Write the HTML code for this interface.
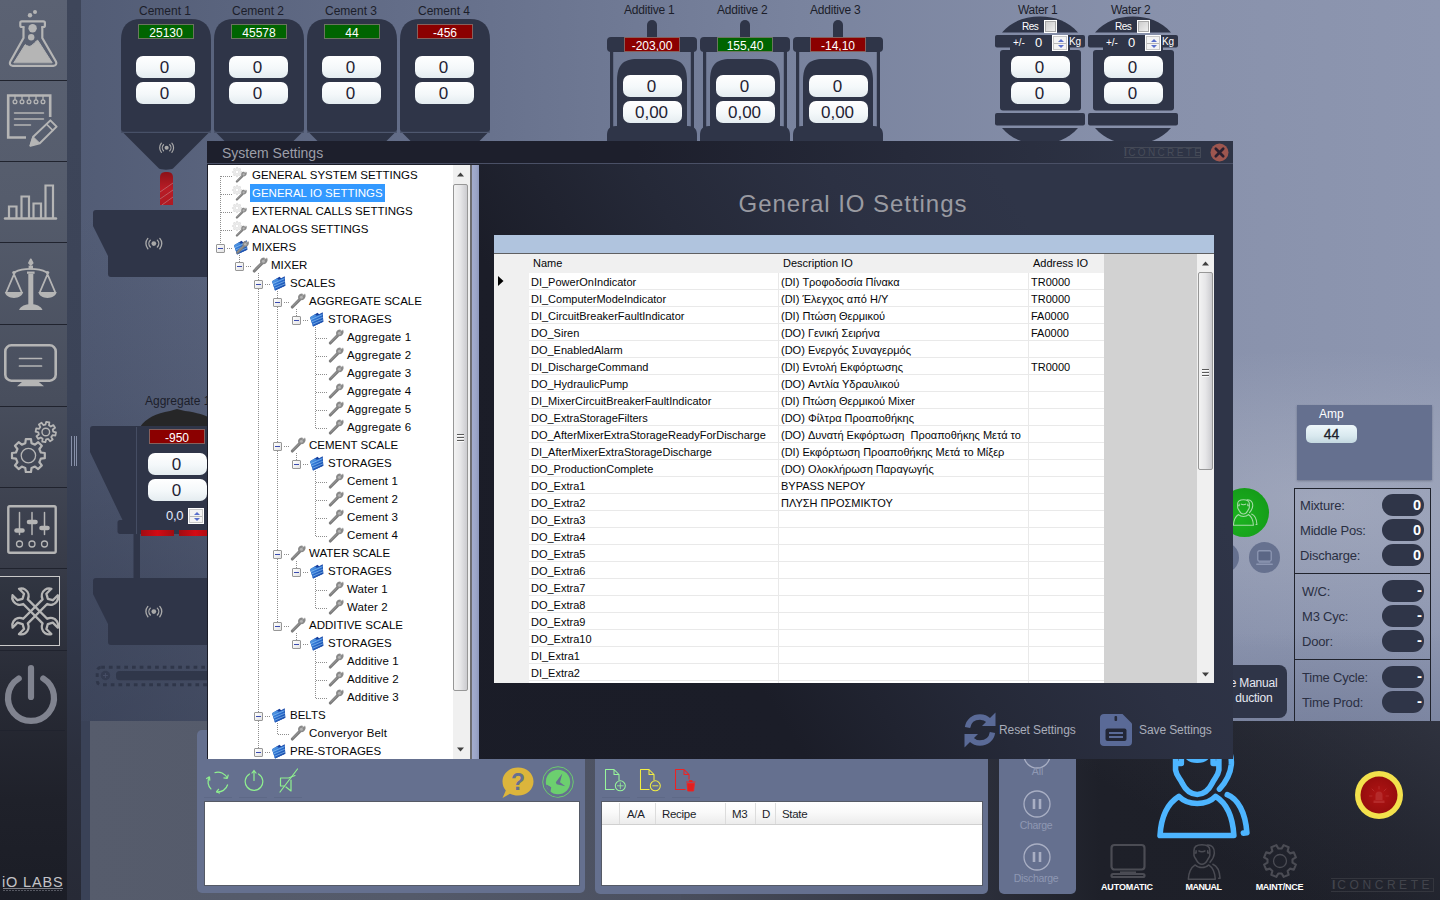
<!DOCTYPE html><html><head><meta charset="utf-8"><title>System Settings</title><style>
*{box-sizing:border-box;margin:0;padding:0}
html,body{width:1440px;height:900px;overflow:hidden}
body{font-family:"Liberation Sans",sans-serif;font-size:12px;color:#1f2230;position:relative;
 background:#6b7590}
#root{position:absolute;left:0;top:0;width:1440px;height:900px;overflow:hidden;
 background:
  radial-gradient(ellipse 1000px 620px at 60px 800px, rgba(34,40,58,.5) 0, rgba(34,40,58,.36) 35%, rgba(36,42,60,.12) 65%, rgba(36,42,60,0) 95%),
  radial-gradient(ellipse 420px 150px at 1320px 500px, rgba(205,208,218,.3) 0, rgba(205,208,218,.16) 50%, rgba(205,208,218,0) 100%),
  radial-gradient(ellipse 460px 130px at 1340px 760px, rgba(80,90,122,.4) 0, rgba(80,90,122,.2) 55%, rgba(80,90,122,0) 100%),
  linear-gradient(to right,#525c75 80px,#636d88 400px,#79839e 800px,#8891ab 1150px,#8d96b0 1440px)}
.abs{position:absolute}
.dk{background:#2f3548}
.lbl{position:absolute;font-size:12px;color:#1c1e2a;white-space:nowrap;text-align:center}
.badge{position:absolute;width:56px;height:15px;border:1px solid #6d7a6d;color:#fff;font-size:12px;line-height:16px;text-align:center;overflow:hidden}
.badge.g{background:#006400;border-color:#6b7560}
.badge.r{background:#8b0000;border-color:#86605c}
.inp{position:absolute;width:59px;height:22px;border-radius:7px;background:linear-gradient(#ffffff,#f4f8fa 55%,#e4ecf0);color:#1f2233;font-size:17px;line-height:24px;text-align:center;text-indent:-2px}
.spin{position:absolute;width:16px;height:16px;background:#f4f4f4;border:1px solid #fff;box-shadow:inset 0 0 0 1px #c8c8c8}
.spin:before{content:"";position:absolute;left:4.5px;top:2.5px;border:3px solid transparent;border-top:0;border-bottom:3.5px solid #5a70cc}
.spin:after{content:"";position:absolute;left:4.5px;bottom:2.5px;border:3px solid transparent;border-bottom:0;border-top:3.5px solid #5a70cc}
.spin i{position:absolute;left:1px;right:1px;top:7px;height:1px;background:#b8b8b8}
</style></head><body><div id="root"><div class="abs" style="left:81px;top:721px;width:1359px;height:179px;background:linear-gradient(to right,#565c6c 0,#545a6a 330px,#4a4f5f 600px,#33364300 0),linear-gradient(to right,#565c6c 0,#545a6a 330px,#484d5c 620px,#2c2f3b 900px,#1e2029 1020px,#1d1f28 1359px)"></div><div class="abs" style="left:81px;top:721px;width:9px;height:179px;background:#3a4257"></div><div class="abs" style="left:1000px;top:721px;width:440px;height:179px;background:linear-gradient(212deg,rgba(72,77,94,.42) 0,rgba(72,77,94,.18) 30%,rgba(72,77,94,0) 60%)"></div><div class="abs" style="left:0;top:0;width:67px;height:900px;background:linear-gradient(to bottom,#5b6273 0,#555c6c 200px,#484e5d 400px,#383c49 560px,#292c37 680px,#1f212a 800px,#1b1d26 900px)"></div><div class="abs" style="left:67px;top:0;width:14px;height:900px;background:linear-gradient(to bottom,#3e465a 0,#3b4357 400px,#333a4d 600px,#2b2f3d 760px,#272a36 900px)"></div><div class="abs" style="left:0;top:80px;width:67px;height:1px;background:#20232e"></div><div class="abs" style="left:0;top:161px;width:67px;height:1px;background:#20232e"></div><div class="abs" style="left:0;top:242px;width:67px;height:1px;background:#20232e"></div><div class="abs" style="left:0;top:324px;width:67px;height:1px;background:#20232e"></div><div class="abs" style="left:0;top:406px;width:67px;height:1px;background:#20232e"></div><div class="abs" style="left:0;top:487px;width:67px;height:1px;background:#20232e"></div><div class="abs" style="left:0;top:568px;width:67px;height:1px;background:#20232e"></div><div class="abs" style="left:0;top:650px;width:67px;height:1px;background:#20232e"></div><div class="abs" style="left:0;top:730px;width:65px;height:1px;background:#20232e"></div><div class="abs" style="left:-1px;top:576px;width:61px;height:70px;border:1px solid #c9c9c9;background:rgba(20,22,30,.12)"></div><div class="abs" style="left:71px;top:436px;width:6px;height:30px;border-left:1px solid #8790a8;border-right:1px solid #8790a8"><div style="margin-left:1.5px;width:1px;height:30px;background:#8790a8"></div></div><svg class="abs" style="left:0px;top:0px" width="67" height="80" viewBox="0 0 67 80" fill="none" stroke="#b5b5b5" stroke-width="2.2" stroke-linecap="round" stroke-linejoin="round">
<circle cx="35" cy="12" r="2" fill="#b5b5b5" stroke="none"/><circle cx="30" cy="15.2" r="2.2" fill="#b5b5b5" stroke="none"/>
<path d="M23.5 27H21.8c-1 0-1.5-.5-1.5-1.5v-2.7c0-1 .5-1.5 1.5-1.5h21.6c1 0 1.5.5 1.5 1.5v2.7c0 1-.5 1.5-1.5 1.5H42.3"/>
<path d="M23.5 27v11L10.3 61.5c-1.2 2.3 0 4.3 2.5 4.3h40.6c2.5 0 3.7-2 2.5-4.3L42.3 38V27"/>
<path d="M14 62.5L25.2 44.6c2 1.3 4 2.5 6 1.2 2.8-1.8 3.8-4.2 6.5-5.6L52 62.5z" fill="#b5b5b5" stroke="#b5b5b5" stroke-width="1"/>
<circle cx="32.6" cy="28.3" r="4.2" fill="#b5b5b5" stroke="none"/><circle cx="31.2" cy="37.3" r="3.2" fill="#b5b5b5" stroke="none"/>
</svg><svg class="abs" style="left:0px;top:81px" width="67" height="80" viewBox="0 0 67 80" fill="none" stroke="#b5b5b5" stroke-width="2.2" stroke-linecap="round" stroke-linejoin="round">
<path d="M26 56.5H8.2V14.5h42V36" stroke-width="2.6" stroke-linejoin="miter" stroke-linecap="butt"/>
<g stroke-width="1.3"><circle cx="15" cy="20.7" r="1.9"/><circle cx="22" cy="20.7" r="1.9"/><circle cx="29" cy="20.7" r="1.9"/><circle cx="36" cy="20.7" r="1.9"/><circle cx="43" cy="20.7" r="1.9"/>
<path d="M15 14.5v4.3M22 14.5v4.3M29 14.5v4.3M36 14.5v4.3M43 14.5v4.3"/></g>
<path d="M14.5 32h29M14.5 38h29M14.5 44h16" stroke-width="1.5"/>
<path d="M50.4 39.4L56.6 45.6 39.8 62.2 30.4 64.7 33.2 55.8Z" stroke-width="2"/><path d="M33.2 55.8L39.8 62.2 30.4 64.7Z" fill="#b5b5b5" stroke-width="1"/><path d="M46.6 43.2L52.8 49.4" stroke-width="1.6"/>
</svg><svg class="abs" style="left:0px;top:162px" width="67" height="80" viewBox="0 0 67 80" fill="none" stroke="#b5b5b5" stroke-width="2.2" stroke-linecap="round" stroke-linejoin="round">
<path d="M5 56.5h51" stroke-width="2.4"/>
<path d="M9 56V44.5h7.5V56M21.5 56V34.5h7.5V56M33.5 56V41.5H41V56M45.5 56V23.5H53V56" stroke-width="2.2" stroke-linejoin="miter"/>
</svg><svg class="abs" style="left:0px;top:243px" width="67" height="81" viewBox="0 0 67 81" fill="none" stroke="#b5b5b5" stroke-width="2.2" stroke-linecap="round" stroke-linejoin="round"><g transform="translate(0 1.8) scale(1 .868)">
<path d="M30.5 26.5h0" />
<path d="M14.5 31.5c5-2.8 9.5-3.7 16-3.7s11 .9 16 3.7" stroke-width="2"/>
<circle cx="14" cy="32" r="1.8" fill="#b5b5b5" stroke="none"/><circle cx="47.5" cy="32" r="1.8" fill="#b5b5b5" stroke="none"/>
<path d="M30.8 16.5l2 4.5-2 2.5-2-2.5z" fill="#b5b5b5" stroke-width="1.5"/>
<rect x="28.6" y="24" width="4.4" height="4.5" fill="#b5b5b5" stroke="none"/>
<path d="M28.3 33.5h5v36h-5z" fill="#b5b5b5" stroke="none"/>
<path d="M27 30.8h7.6v2.6H27z" fill="#b5b5b5" stroke="none"/>
<path d="M19 75c2-4.5 6-6.5 11.8-6.5S40.5 70.5 42.5 75z" fill="#b5b5b5" stroke="none"/>
<path d="M14 34L6.5 54M14 34l7.5 20M47.5 34L40 54M47.5 34L55 54" stroke-width="1.8"/>
<path d="M4.8 54.5h18.4c-.8 4.3-4.4 6.8-9.2 6.8s-8.4-2.5-9.2-6.8zM38.3 54.5h18.4c-.8 4.3-4.4 6.8-9.2 6.8s-8.4-2.5-9.2-6.8z" fill="#b5b5b5" stroke="none"/>
</g>
</svg><svg class="abs" style="left:0px;top:325px" width="67" height="80" viewBox="0 0 67 80" fill="none" stroke="#b5b5b5" stroke-width="2.2" stroke-linecap="round" stroke-linejoin="round">
<rect x="5.3" y="20.3" width="50.4" height="35.4" rx="6" stroke-width="2.6"/>
<path d="M19.5 33.5h22M19.5 41h22" stroke-width="1.7"/>
<path d="M22.5 56.5h15.8l5.7 4.7H17z" fill="#b5b5b5" stroke="none"/>
</svg><svg class="abs" style="left:0px;top:406px" width="67" height="81" viewBox="0 0 67 81" fill="none" stroke="#b5b5b5" stroke-width="2.2" stroke-linecap="round" stroke-linejoin="round">
<path d="M53.19 25.68 L55.99 26.44 L55.36 29.57 L52.48 29.18 L51.26 31.00 L52.70 33.52 L50.04 35.28 L48.28 32.97 L46.12 33.39 L45.36 36.19 L42.23 35.56 L42.62 32.68 L40.80 31.46 L38.28 32.90 L36.52 30.24 L38.83 28.48 L38.41 26.32 L35.61 25.56 L36.24 22.43 L39.12 22.82 L40.34 21.00 L38.90 18.48 L41.56 16.72 L43.32 19.03 L45.48 18.61 L46.24 15.81 L49.37 16.44 L48.98 19.32 L50.80 20.54 L53.32 19.10 L55.08 21.76 L52.77 23.52Z" stroke-width="1.8"/><circle cx="45.8" cy="26" r="3.8" stroke-width="1.4"/>
<path d="M40.82 46.51 L44.80 47.00 L44.80 52.20 L40.82 52.69 L39.37 56.20 L41.83 59.36 L38.16 63.03 L35.00 60.57 L31.49 62.02 L31.00 66.00 L25.80 66.00 L25.31 62.02 L21.80 60.57 L18.64 63.03 L14.97 59.36 L17.43 56.20 L15.98 52.69 L12.00 52.20 L12.00 47.00 L15.98 46.51 L17.43 43.00 L14.97 39.84 L18.64 36.17 L21.80 38.63 L25.31 37.18 L25.80 33.20 L31.00 33.20 L31.49 37.18 L35.00 38.63 L38.16 36.17 L41.83 39.84 L39.37 43.00Z" stroke-width="2.2"/><circle cx="28.4" cy="49.6" r="7.2" stroke-width="1.3"/>
</svg><svg class="abs" style="left:0px;top:488px" width="67" height="80" viewBox="0 0 67 80" fill="none" stroke="#b5b5b5" stroke-width="2.2" stroke-linecap="round" stroke-linejoin="round">
<rect x="8.3" y="18.3" width="47.4" height="46.4" rx="1.5" stroke-width="2.4"/>
<path d="M19.5 24.5v22M32 24.5v22M44.5 24.5v22" stroke-width="1.5"/>
<path d="M16.5 42.5h6M29 34h6.5M41.5 40h6" stroke-width="4.6"/>
<circle cx="19.5" cy="56" r="3" stroke-width="1.3"/><circle cx="32" cy="56" r="3" stroke-width="1.3"/><circle cx="44.5" cy="56" r="3" stroke-width="1.3"/>
</svg><svg class="abs" style="left:0px;top:569px" width="67" height="81" viewBox="0 0 67 81" fill="none" stroke="#b5b5b5" stroke-width="2.2" stroke-linecap="round" stroke-linejoin="round">
<g transform="translate(35.2 42.4) scale(.76)"><path d="M-4.3 -18c-4.8 -1.8 -7.7 -6.5 -6.7 -11.5 .6 -3 2.5 -5.3 5 -6.6v9.3l6 3.3 6 -3.3v-9.3c2.5 1.3 4.4 3.6 5 6.6 1 5 -1.9 9.7 -6.7 11.5v36c4.8 1.8 7.7 6.5 6.7 11.5 -.6 3 -2.5 5.3 -5 6.6v-9.3l-6 -3.3 -6 3.3v9.3c-2.5 -1.3 -4.4 -3.6 -5 -6.6 -1 -5 1.9 -9.7 6.7 -11.500z" transform="rotate(45)" stroke-width="3.1"/><path d="M-4.3 -18c-4.8 -1.8 -7.7 -6.5 -6.7 -11.5 .6 -3 2.5 -5.3 5 -6.6v9.3l6 3.3 6 -3.3v-9.3c2.5 1.3 4.4 3.6 5 6.6 1 5 -1.9 9.7 -6.7 11.5v36c4.8 1.8 7.7 6.5 6.7 11.5 -.6 3 -2.5 5.3 -5 6.6v-9.3l-6 -3.3 -6 3.3v9.3c-2.5 -1.3 -4.4 -3.6 -5 -6.6 -1 -5 1.9 -9.7 6.7 -11.500z" transform="rotate(-45)" stroke-width="3.1"/></g>
</svg><svg class="abs" style="left:0;top:649.5px" width="67" height="80" viewBox="0 0 67 80" fill="none" stroke="#80838f" stroke-width="6.2" stroke-linecap="round"><path d="M31 18v29"/><path d="M18.7 28.5a23 23 0 1 0 24.6 0"/></svg><div class="abs" style="left:2px;top:873.5px;width:64px;font-size:14.5px;line-height:16px;color:#c4c4c8;letter-spacing:.85px;white-space:nowrap">iO LABS</div><div class="abs" style="left:3px;top:888px;width:60px;height:1px;background:#7e8088"></div><div class="abs" style="left:3px;top:890px;width:60px;height:1px;background:repeating-linear-gradient(to right,#565862 0 2px,transparent 2px 3px)"></div><div class="lbl" style="left:139px;top:4px">Cement 1</div><svg class="abs" style="left:121px;top:19px" width="90" height="152" viewBox="0 0 90 152"><path d="M0 21C0 7 7 0 20 0h50c13 0 20 7 20 21v89c0 2-1 3-3 3H3c-2 0-3-1-3-3z" fill="#2f3548"/><path d="M2.5 114h85L52 149.5c-1.5 1.5-12.5 1.5-14 0z" fill="#2d3345"/><path d="M0 113h90" stroke="#3b4256" stroke-width="1"/></svg><div class="badge g" style="left:138px;top:24px">25130</div><div class="inp" style="left:136px;top:56px">0</div><div class="inp" style="left:136px;top:82px">0</div><div class="lbl" style="left:232px;top:4px">Cement 2</div><svg class="abs" style="left:214px;top:19px" width="90" height="152" viewBox="0 0 90 152"><path d="M0 21C0 7 7 0 20 0h50c13 0 20 7 20 21v89c0 2-1 3-3 3H3c-2 0-3-1-3-3z" fill="#2f3548"/><path d="M2.5 114h85L52 149.5c-1.5 1.5-12.5 1.5-14 0z" fill="#2d3345"/><path d="M0 113h90" stroke="#3b4256" stroke-width="1"/></svg><div class="badge g" style="left:231px;top:24px">45578</div><div class="inp" style="left:229px;top:56px">0</div><div class="inp" style="left:229px;top:82px">0</div><div class="lbl" style="left:325px;top:4px">Cement 3</div><svg class="abs" style="left:307px;top:19px" width="90" height="152" viewBox="0 0 90 152"><path d="M0 21C0 7 7 0 20 0h50c13 0 20 7 20 21v89c0 2-1 3-3 3H3c-2 0-3-1-3-3z" fill="#2f3548"/><path d="M2.5 114h85L52 149.5c-1.5 1.5-12.5 1.5-14 0z" fill="#2d3345"/><path d="M0 113h90" stroke="#3b4256" stroke-width="1"/></svg><div class="badge g" style="left:324px;top:24px">44</div><div class="inp" style="left:322px;top:56px">0</div><div class="inp" style="left:322px;top:82px">0</div><div class="lbl" style="left:418px;top:4px">Cement 4</div><svg class="abs" style="left:400px;top:19px" width="90" height="152" viewBox="0 0 90 152"><path d="M0 21C0 7 7 0 20 0h50c13 0 20 7 20 21v89c0 2-1 3-3 3H3c-2 0-3-1-3-3z" fill="#2f3548"/><path d="M2.5 114h85L52 149.5c-1.5 1.5-12.5 1.5-14 0z" fill="#2d3345"/><path d="M0 113h90" stroke="#3b4256" stroke-width="1"/></svg><div class="badge r" style="left:417px;top:24px">-456</div><div class="inp" style="left:415px;top:56px">0</div><div class="inp" style="left:415px;top:82px">0</div><svg class="abs" style="left:158.36px;top:142.24px" width="17.28" height="11.52" viewBox="-12 -8 24 16" fill="none" stroke="#a9a9a9" stroke-width="1.65" stroke-linecap="round"><circle r="2.9" fill="#a9a9a9" stroke="none"/><path d="M-4.3 -4.2a6 6 0 0 0 0 8.4M4.3 -4.2a6 6 0 0 1 0 8.4M-7.3 -6.3a9.6 9.6 0 0 0 0 12.6M7.3 -6.3a9.6 9.6 0 0 1 0 12.6"/></svg><svg class="abs" style="left:160px;top:171px" width="13" height="35" viewBox="0 0 14 35" preserveAspectRatio="none"><defs><linearGradient id="au" x1="0" x2="0" y1="0" y2="1"><stop offset="0" stop-color="#8c1218"/><stop offset=".5" stop-color="#b81c26"/><stop offset="1" stop-color="#b01a22"/></linearGradient></defs><path d="M0 6.5C0 2 3 1 7 1s7 1 7 5.5V34H0z" fill="url(#au)"/><path d="M0 21L14 12M0 28L14 19M2 34L14 26" stroke="#c07a80" stroke-width=".7"/></svg><svg class="abs" style="left:92px;top:210px" width="120" height="68" viewBox="0 0 120 68"><path d="M1 3c0-2 1-3 3-3h116v67H19c-2 0-3-1-3-3V46L1 16z" fill="#2f3548"/></svg><svg class="abs" style="left:144.16px;top:236.94px" width="19.68" height="13.12" viewBox="-12 -8 24 16" fill="none" stroke="#a9a9a9" stroke-width="1.65" stroke-linecap="round"><circle r="2.9" fill="#a9a9a9" stroke="none"/><path d="M-4.3 -4.2a6 6 0 0 0 0 8.4M4.3 -4.2a6 6 0 0 1 0 8.4M-7.3 -6.3a9.6 9.6 0 0 0 0 12.6M7.3 -6.3a9.6 9.6 0 0 1 0 12.6"/></svg><div class="lbl" style="left:624px;top:3px;letter-spacing:-.22px">Additive 1</div><svg class="abs" style="left:607px;top:19px" width="90" height="125" viewBox="0 0 90 125" fill="#2f3548"><path d="M40 18.5V6a5 5 0 0 1 10 0v12.5z"/><rect x="0" y="18" width="90" height="15" rx="4"/><rect x="3" y="32" width="3.2" height="78"/><rect x="83.8" y="32" width="3.2" height="78"/><path d="M10 110V62c0-16 6-22 20-22h30c14 0 20 6 20 22v48z"/><path d="M0 125v-9c0-6 3-9 9-9h72c6 0 9 3 9 9v9z"/></svg><div class="badge r" style="left:624px;top:37px">-203,00</div><div class="inp" style="left:623px;top:75px">0</div><div class="inp" style="left:623px;top:101px">0,00</div><div class="lbl" style="left:717px;top:3px;letter-spacing:-.22px">Additive 2</div><svg class="abs" style="left:700px;top:19px" width="90" height="125" viewBox="0 0 90 125" fill="#2f3548"><path d="M40 18.5V6a5 5 0 0 1 10 0v12.5z"/><rect x="0" y="18" width="90" height="15" rx="4"/><rect x="3" y="32" width="3.2" height="78"/><rect x="83.8" y="32" width="3.2" height="78"/><path d="M10 110V62c0-16 6-22 20-22h30c14 0 20 6 20 22v48z"/><path d="M0 125v-9c0-6 3-9 9-9h72c6 0 9 3 9 9v9z"/></svg><div class="badge g" style="left:717px;top:37px">155,40</div><div class="inp" style="left:716px;top:75px">0</div><div class="inp" style="left:716px;top:101px">0,00</div><div class="lbl" style="left:810px;top:3px;letter-spacing:-.22px">Additive 3</div><svg class="abs" style="left:793px;top:19px" width="90" height="125" viewBox="0 0 90 125" fill="#2f3548"><path d="M40 18.5V6a5 5 0 0 1 10 0v12.5z"/><rect x="0" y="18" width="90" height="15" rx="4"/><rect x="3" y="32" width="3.2" height="78"/><rect x="83.8" y="32" width="3.2" height="78"/><path d="M10 110V62c0-16 6-22 20-22h30c14 0 20 6 20 22v48z"/><path d="M0 125v-9c0-6 3-9 9-9h72c6 0 9 3 9 9v9z"/></svg><div class="badge r" style="left:810px;top:37px">-14,10</div><div class="inp" style="left:809px;top:75px">0</div><div class="inp" style="left:809px;top:101px">0,00</div><div class="lbl" style="left:1018px;top:3px;letter-spacing:-.3px">Water 1</div><svg class="abs" style="left:995px;top:16px" width="90" height="128" viewBox="0 0 90 128" fill="#2f3548"><path d="M7 16.5C17 5 30 .5 45 .5S73 5 83 16.5z"/><rect x="0" y="19" width="90" height="12.5" rx="2"/><rect x="15" y="30" width="60" height="6"/><rect x="5" y="34" width="81" height="60.5" rx="3"/><rect x="0" y="97" width="90" height="12.5" rx="2"/><path d="M7 112C17 123.5 30 128 45 128s28-4.5 38-16z"/></svg><div class="abs" style="left:1022px;top:21px;font-size:10px;color:#fff;letter-spacing:-.5px">Res</div><div class="abs" style="left:1044px;top:20px;width:13px;height:13px;border:1px solid #fff;background:linear-gradient(135deg,#c9c9c9,#f2f2f2);box-shadow:inset 0 0 0 1px #a8a8a8"></div><div class="abs" style="left:1013px;top:37px;font-size:10px;color:#fff">+/-</div><div class="abs" style="left:1035px;top:35px;font-size:13px;color:#fff">0</div><div class="spin" style="left:1052px;top:35px"><i></i></div><div class="abs" style="left:1069px;top:36px;font-size:10px;color:#fff;letter-spacing:-.2px">Kg</div><div class="inp" style="left:1011px;top:56px">0</div><div class="inp" style="left:1011px;top:82px">0</div><div class="lbl" style="left:1111px;top:3px;letter-spacing:-.3px">Water 2</div><svg class="abs" style="left:1088px;top:16px" width="90" height="128" viewBox="0 0 90 128" fill="#2f3548"><path d="M7 16.5C17 5 30 .5 45 .5S73 5 83 16.5z"/><rect x="0" y="19" width="90" height="12.5" rx="2"/><rect x="15" y="30" width="60" height="6"/><rect x="5" y="34" width="81" height="60.5" rx="3"/><rect x="0" y="97" width="90" height="12.5" rx="2"/><path d="M7 112C17 123.5 30 128 45 128s28-4.5 38-16z"/></svg><div class="abs" style="left:1115px;top:21px;font-size:10px;color:#fff;letter-spacing:-.5px">Res</div><div class="abs" style="left:1137px;top:20px;width:13px;height:13px;border:1px solid #fff;background:linear-gradient(135deg,#c9c9c9,#f2f2f2);box-shadow:inset 0 0 0 1px #a8a8a8"></div><div class="abs" style="left:1106px;top:37px;font-size:10px;color:#fff">+/-</div><div class="abs" style="left:1128px;top:35px;font-size:13px;color:#fff">0</div><div class="spin" style="left:1145px;top:35px"><i></i></div><div class="abs" style="left:1162px;top:36px;font-size:10px;color:#fff;letter-spacing:-.2px">Kg</div><div class="inp" style="left:1104px;top:56px">0</div><div class="inp" style="left:1104px;top:82px">0</div><div class="lbl" style="left:145px;top:394px;text-align:left">Aggregate 1</div><svg class="abs" style="left:140px;top:408px" width="72" height="19" viewBox="0 0 72 19"><path d="M0 19C6 10 16 5.5 30 3l7-2 8 2c12 1.5 20 4 27 8v8z" fill="#262627"/></svg><svg class="abs" style="left:89px;top:425px" width="123" height="154" viewBox="0 0 123 154"><path d="M1 4c0-2 1-3 3-3h119v108H51v44h-6.5v-44H31c-1.5 0-2.5-1-2.5-2.5v-9c0-1.5 1-2.5 2.5-2.5h2.5L1 27z" fill="#2f3548"/><path d="M47.5 2v107" stroke="#454d63" stroke-width="1"/></svg><div class="badge r" style="left:149px;top:429px">-950</div><div class="inp" style="left:148px;top:453px">0</div><div class="inp" style="left:148px;top:479px">0</div><div class="abs" style="left:166px;top:508px;font-size:13px;color:#e4ecff;letter-spacing:-.3px">0,0</div><div class="spin" style="left:188px;top:508px"><i></i></div><div class="abs" style="left:141px;top:530px;width:33px;height:6px;background:linear-gradient(to right,#a00d12,#d40a14 50%,#a00d12)"></div><div class="abs" style="left:179px;top:530px;width:33px;height:6px;background:linear-gradient(to right,#a00d12,#d40a14 50%,#a00d12)"></div><svg class="abs" style="left:92px;top:578px" width="120" height="68" viewBox="0 0 120 68"><path d="M1 3c0-2 1-3 3-3h116v67H19c-2 0-3-1-3-3V46L1 16z" fill="#2f3548"/></svg><svg class="abs" style="left:144.16px;top:604.94px" width="19.68" height="13.12" viewBox="-12 -8 24 16" fill="none" stroke="#a9a9a9" stroke-width="1.65" stroke-linecap="round"><circle r="2.9" fill="#a9a9a9" stroke="none"/><path d="M-4.3 -4.2a6 6 0 0 0 0 8.4M4.3 -4.2a6 6 0 0 1 0 8.4M-7.3 -6.3a9.6 9.6 0 0 0 0 12.6M7.3 -6.3a9.6 9.6 0 0 1 0 12.6"/></svg><svg class="abs" style="left:92px;top:662px" width="140" height="28" viewBox="0 0 140 28"><rect x="5.2" y="5.2" width="150" height="17.6" rx="4" fill="none" stroke="#2f3649" stroke-width="2.9" stroke-dasharray="3.7 4"/><rect x="24" y="9" width="130" height="9.2" rx="3.5" fill="#30374a"/><circle cx="13.4" cy="13.5" r="4.7" fill="#343b50"/><path d="M11 13.500h4.800M13.400 11.100v4.8" stroke="#485068" stroke-width=".9"/></svg><div class="abs" style="left:1297px;top:405px;width:135px;height:75px;background:#65708f;box-shadow:0 1px 2px rgba(40,46,66,.35)"></div><div class="abs" style="left:1319px;top:407px;font-size:12px;color:#fff">Amp</div><div class="abs" style="left:1306px;top:425px;width:51px;height:18px;border-radius:5px;background:linear-gradient(#eef7fb,#d9e9ef 60%,#c4d8e0);font-size:14px;line-height:18px;text-align:center;color:#1c1e2a;-webkit-text-stroke:.3px #1c1e2a">44</div><div class="abs" style="left:1294px;top:488px;width:137px;height:233px;border:1px solid #20232d;border-bottom:0"></div><div class="abs" style="left:1294px;top:573px;width:137px;height:1px;background:#20232d"></div><div class="abs" style="left:1294px;top:659px;width:137px;height:1px;background:#20232d"></div><div class="abs" style="left:1300px;top:498px;font-size:13px;line-height:16px;letter-spacing:-.2px;color:#2a2f42;white-space:nowrap">Mixture:</div><div class="abs" style="left:1382px;top:494px;width:42px;height:22px;border-radius:11px;background:#2f3548;color:#fff;font-weight:bold;font-size:14.5px;line-height:22px;text-align:right;padding-right:3px">0</div><div class="abs" style="left:1300px;top:523px;font-size:13px;line-height:16px;letter-spacing:-.2px;color:#2a2f42;white-space:nowrap">Middle Pos:</div><div class="abs" style="left:1382px;top:519px;width:42px;height:22px;border-radius:11px;background:#2f3548;color:#fff;font-weight:bold;font-size:14.5px;line-height:22px;text-align:right;padding-right:3px">0</div><div class="abs" style="left:1300px;top:548px;font-size:13px;line-height:16px;letter-spacing:-.2px;color:#2a2f42;white-space:nowrap">Discharge:</div><div class="abs" style="left:1382px;top:544px;width:42px;height:22px;border-radius:11px;background:#2f3548;color:#fff;font-weight:bold;font-size:14.5px;line-height:22px;text-align:right;padding-right:3px">0</div><div class="abs" style="left:1302px;top:584px;font-size:13px;line-height:16px;letter-spacing:-.2px;color:#2a2f42;white-space:nowrap">W/C:</div><div class="abs" style="left:1382px;top:580px;width:42px;height:22px;border-radius:11px;background:#2f3548;color:#fff;font-weight:bold;font-size:15px;line-height:20px;text-align:right;padding-right:2px">-</div><div class="abs" style="left:1302px;top:609px;font-size:13px;line-height:16px;letter-spacing:-.2px;color:#2a2f42;white-space:nowrap">M3 Cyc:</div><div class="abs" style="left:1382px;top:605px;width:42px;height:22px;border-radius:11px;background:#2f3548;color:#fff;font-weight:bold;font-size:15px;line-height:20px;text-align:right;padding-right:2px">-</div><div class="abs" style="left:1302px;top:634px;font-size:13px;line-height:16px;letter-spacing:-.2px;color:#2a2f42;white-space:nowrap">Door:</div><div class="abs" style="left:1382px;top:630px;width:42px;height:22px;border-radius:11px;background:#2f3548;color:#fff;font-weight:bold;font-size:15px;line-height:20px;text-align:right;padding-right:2px">-</div><div class="abs" style="left:1302px;top:670px;font-size:13px;line-height:16px;letter-spacing:-.2px;color:#2a2f42;white-space:nowrap">Time Cycle:</div><div class="abs" style="left:1382px;top:666px;width:42px;height:22px;border-radius:11px;background:#2f3548;color:#fff;font-weight:bold;font-size:15px;line-height:20px;text-align:right;padding-right:2px">-</div><div class="abs" style="left:1302px;top:695px;font-size:13px;line-height:16px;letter-spacing:-.2px;color:#2a2f42;white-space:nowrap">Time Prod:</div><div class="abs" style="left:1382px;top:691px;width:42px;height:22px;border-radius:11px;background:#2f3548;color:#fff;font-weight:bold;font-size:15px;line-height:20px;text-align:right;padding-right:2px">-</div><svg class="abs" style="left:1219px;top:487px" width="51" height="51" viewBox="0 0 52 52"><defs><radialGradient id="gg" cx=".4" cy=".6" r=".7"><stop offset="0" stop-color="#1cb320"/><stop offset="1" stop-color="#149a18"/></radialGradient></defs><circle cx="26" cy="26" r="25" fill="url(#gg)"/></svg><svg class="abs" style="left:1228.2px;top:501.8px;overflow:visible" width="35.2" height="27.1" viewBox="0 0 1170 900" fill="none" stroke="#a5dba6" stroke-width="36" stroke-linecap="round" stroke-linejoin="round"><path d="M320 60C320 -40 420 -78 515 -78S710 -40 710 60V180C700 240 670 250 650 300 620 360 570 400 515 400S410 360 380 300C360 250 330 240 320 180Z"/><path d="M372 70V122H345M658 70V122H685"/><path d="M440 72C470 98 560 98 590 72"/><path d="M640 -70C760 -80 830 0 822 130 815 200 790 270 715 352"/><path d="M350 418C250 480 190 600 180 770H845C835 600 780 480 680 418 640 460 580 482 515 482S390 460 350 418Z"/><path d="M785 402C880 440 950 560 962 745L930 748"/></svg><svg class="abs" style="left:1249px;top:542px" width="31" height="31" viewBox="0 0 30 30"><circle cx="15" cy="15" r="15" fill="#66718f"/><g fill="#5b6685" stroke="#8c96b2" stroke-width="1.3" stroke-linecap="round"><rect x="8.5" y="8.5" width="13" height="10" rx="1.5"/><path d="M7.5 21.5h15M10 19.5h10"/></g></svg><svg class="abs" style="left:1208px;top:542px" width="31" height="31" viewBox="0 0 30 30"><circle cx="15" cy="15" r="15" fill="#66718f"/></svg><div class="abs" style="left:1180px;top:665px;width:107px;height:53px;border-radius:8px;background:#2f3548;color:#e6e9f2;font-size:12px;line-height:15px;letter-spacing:-.2px;text-align:right;padding:11px 9.5px 0 0;white-space:nowrap">e Manual<br><span style="padding-right:5px">duction</span></div><div class="abs" style="left:197px;top:730px;width:388px;height:163px;background:#65708f;border-radius:5px"></div><div class="abs" style="left:204px;top:801px;width:376px;height:85px;background:#fff;border:1px solid #555a66"></div><svg class="abs" style="left:205px;top:769px" width="26" height="26" viewBox="-13 -13 26 26" fill="none" stroke="#8ff08f" stroke-width="1.2"><path d="M-3.5 -9.3A10 10 0 0 1 9.3 -3.6M9.7 2.5A10 10 0 0 1 -1.7 9.8M-6.7 7.4A10 10 0 0 1 -8.5 -5.2"/><path d="M9.3 -3.6l-3.8 -.6M9.3 -3.6l1 -3.7M-1.7 9.8l2.6 -2.8M-1.7 9.8l3.6 1.5M-8.5 -5.2l.3 3.8M-8.5 -5.2l-3.3 2"/></svg><div class="abs" style="left:204px;top:797px;width:28px;height:1px;background:rgba(90,100,130,.6)"></div><div class="abs" style="left:239px;top:797px;width:28px;height:1px;background:rgba(90,100,130,.6)"></div><div class="abs" style="left:274px;top:797px;width:28px;height:1px;background:rgba(90,100,130,.6)"></div><svg class="abs" style="left:243px;top:769px" width="22" height="24" viewBox="-11 -12 22 24" fill="none" stroke="#8ff08f" stroke-width="1.2" stroke-linecap="round"><path d="M0 -10.5v10M0 -10.5l-2 2.5M0 -10.5l2 2.5"/><path d="M-4.5 -7a8.8 8.8 0 1 0 9 0"/></svg><svg class="abs" style="left:277px;top:768px" width="22" height="26" viewBox="0 0 22 26" fill="none" stroke="#8ff08f" stroke-width="1.2" stroke-linecap="round" stroke-linejoin="round"><path d="M18 7.5L11.5 10H3.5v8h3.5M14 12v11l-5-4"/><path d="M20.5 1L3 24"/></svg><svg class="abs" style="left:500px;top:765px" width="36" height="36" viewBox="0 0 36 36"><path d="M18 2.5c8.8 0 15.5 6 15.5 14s-6.7 14-15.5 14c-3 0-5.6-.6-8-1.8L2.5 33l3.3-7.5C3.7 23 2.5 20 2.5 16.5c0-8 6.7-14 15.5-14z" fill="#dcb53c"/><text x="18" y="24.5" text-anchor="middle" font-family="Liberation Sans,sans-serif" font-weight="bold" font-size="23" fill="#65708f">?</text></svg><svg class="abs" style="left:541px;top:765px" width="34" height="34" viewBox="-17 -17 34 34"><circle r="15.3" fill="none" stroke="#6bcb6e" stroke-width="1"/><circle r="12.2" fill="#6ccf6f"/><path d="M-2.2 .2L4.3 -8.4 2 .3 7.3 4.2 -1.4 2.3Z" fill="#65708f"/><path d="M-11.5 3.5l3.8 2.3 -.8 4.500c2.3 2.6 5.8 3.9 9.5 3.600" stroke="#65708f" stroke-width="1.700" fill="none"/><path d="M-12.3 2.5l4.8 2.8 -1 5z" fill="#65708f"/></svg><div class="abs" style="left:595px;top:758px;width:393px;height:136px;background:#65708f;border-radius:0 0 5px 5px"></div><div class="abs" style="left:601px;top:801px;width:382px;height:85px;background:#fff;border:1px solid #555a66"></div><div class="abs" style="left:602px;top:802px;width:380px;height:23px;background:linear-gradient(#fff,#fafafa 45%,#ececec);border-bottom:1px solid #d0d0d0"></div><div class="abs" style="left:619px;top:803px;width:1px;height:21px;background:#dcdcdc"></div><div class="abs" style="left:655px;top:803px;width:1px;height:21px;background:#dcdcdc"></div><div class="abs" style="left:725px;top:803px;width:1px;height:21px;background:#dcdcdc"></div><div class="abs" style="left:755px;top:803px;width:1px;height:21px;background:#dcdcdc"></div><div class="abs" style="left:775px;top:803px;width:1px;height:21px;background:#dcdcdc"></div><div class="abs" style="left:627px;top:808px;font-size:11.5px;letter-spacing:-.3px;color:#1c1e2a">A/A</div><div class="abs" style="left:662px;top:808px;font-size:11.5px;letter-spacing:-.3px;color:#1c1e2a">Recipe</div><div class="abs" style="left:732px;top:808px;font-size:11.5px;letter-spacing:-.3px;color:#1c1e2a">M3</div><div class="abs" style="left:762px;top:808px;font-size:11.5px;letter-spacing:-.3px;color:#1c1e2a">D</div><div class="abs" style="left:782px;top:808px;font-size:11.5px;letter-spacing:-.3px;color:#1c1e2a">State</div><svg class="abs" style="left:603px;top:767px" width="24" height="26" viewBox="0 0 24 26" fill="none" stroke="#98f59b" stroke-width="1.05" stroke-linejoin="round"><path d="M11.5 22.5H2.5V2.5h8.500l5 5v6M11 2.5v5h5"/><circle cx="17.3" cy="18.8" r="5"/><path d="M17.3 15.5v6.600M14 18.8h6.6" stroke-width=".8"/></svg><svg class="abs" style="left:638px;top:767px" width="24" height="26" viewBox="0 0 24 26" fill="none" stroke="#f3ee42" stroke-width="1.05" stroke-linejoin="round"><path d="M11.5 22.5H2.5V2.5h8.500l5 5v6M11 2.5v5h5"/><circle cx="17.3" cy="18.8" r="5"/><path d="M14.3 18.8h6" stroke-width=".9"/></svg><svg class="abs" style="left:673px;top:767px" width="24" height="26" viewBox="0 0 24 26" fill="none" stroke="#ee2222" stroke-width="1.05" stroke-linejoin="round"><path d="M12.5 22.5H2.5V2.5h8.500l5 5v5M11 2.5v5h5"/><path d="M14 16.5h7.400l-.8 7.5h-5.800zM13 15h9.400M16.3 15v-1.4h2.8V15" fill="#e02020" stroke-width=".9"/></svg><div class="abs" style="left:602px;top:797px;width:28px;height:1px;background:rgba(90,100,130,.6)"></div><div class="abs" style="left:637px;top:797px;width:28px;height:1px;background:rgba(90,100,130,.6)"></div><div class="abs" style="left:672px;top:797px;width:28px;height:1px;background:rgba(90,100,130,.6)"></div><div class="abs" style="left:999px;top:758px;width:77px;height:136px;background:#65708f;border-radius:0 0 5px 5px"></div><svg class="abs" style="left:1022px;top:740px" width="30" height="30" viewBox="-15 -15 30 30" fill="none" stroke="#a9afc4" stroke-width="1.3"><circle r="13"/></svg><div class="abs" style="left:999px;top:765px;width:77px;text-align:center;font-size:10.5px;color:#8f98b3">All</div><svg class="abs" style="left:1022px;top:788.5px" width="30" height="30" viewBox="-15 -15 30 30" fill="none" stroke="#a9afc4" stroke-width="1.3"><circle r="13"/><path d="M-3 -5v10M3 -5v10" stroke-width="2.6"/></svg><div class="abs" style="left:996px;top:818.5px;width:80px;text-align:center;font-size:10.5px;letter-spacing:-.3px;color:#8f98b3">Charge</div><svg class="abs" style="left:1022px;top:841.5px" width="30" height="30" viewBox="-15 -15 30 30" fill="none" stroke="#a9afc4" stroke-width="1.3"><circle r="13"/><path d="M-3 -5v10M3 -5v10" stroke-width="2.6"/></svg><div class="abs" style="left:996px;top:871.5px;width:80px;text-align:center;font-size:10.5px;letter-spacing:-.3px;color:#8f98b3">Discharge</div><svg class="abs" style="left:1140px;top:750px;overflow:visible" width="130" height="100" viewBox="0 0 1170 900" fill="none" stroke="#4db5ff" stroke-width="50" stroke-linecap="round" stroke-linejoin="round"><path d="M320 60C320 -40 420 -78 515 -78S710 -40 710 60V180C700 240 670 250 650 300 620 360 570 400 515 400S410 360 380 300C360 250 330 240 320 180Z"/><path d="M372 70V122H345M658 70V122H685"/><path d="M440 72C470 98 560 98 590 72"/><path d="M640 -70C760 -80 830 0 822 130 815 200 790 270 715 352"/><path d="M350 418C250 480 190 600 180 770H845C835 600 780 480 680 418 640 460 580 482 515 482S390 460 350 418Z"/><path d="M785 402C880 440 950 560 962 745L930 748"/></svg><svg class="abs" style="left:1354px;top:770px" width="50" height="50" viewBox="-25 -25 50 50"><defs><radialGradient id="em"><stop offset="0" stop-color="#b01414"/><stop offset="1" stop-color="#960d0d"/></radialGradient></defs><circle r="24" fill="#f3e14c"/><circle r="18.5" fill="url(#em)"/><g fill="#b52a2a" stroke="none"><path d="M-3.5 5v-5a3.5 3.5 0 0 1 7 0v5zM-5.5 5.5h11v2.5h-11z"/></g><g stroke="#b52a2a" stroke-width="1" stroke-linecap="round"><path d="M0 -6v-2.5M-5 -4l-2-2M5 -4l2-2M-7 1h-2.5M7 1h2.5"/></g></svg><svg class="abs" style="left:1108px;top:842px" width="40" height="38" viewBox="0 0 40 38" fill="none" stroke="#4b4c54" stroke-width="2.2" stroke-linejoin="round"><rect x="3.5" y="3" width="33" height="24.5" rx="3"/><path d="M5 32h30c1 0 1.5.5 1.5 1.5S36 35 35 35H5c-1 0-1.5-.5-1.5-1.5S4 32 5 32z"/><path d="M12 30.5h16"/></svg><svg class="abs" style="left:1180.7px;top:847.5px;overflow:visible" width="47.5" height="36.54" viewBox="0 0 1170 900" fill="none" stroke="#4b4c54" stroke-width="37" stroke-linecap="round" stroke-linejoin="round"><path d="M320 60C320 -40 420 -78 515 -78S710 -40 710 60V180C700 240 670 250 650 300 620 360 570 400 515 400S410 360 380 300C360 250 330 240 320 180Z"/><path d="M372 70V122H345M658 70V122H685"/><path d="M440 72C470 98 560 98 590 72"/><path d="M640 -70C760 -80 830 0 822 130 815 200 790 270 715 352"/><path d="M350 418C250 480 190 600 180 770H845C835 600 780 480 680 418 640 460 580 482 515 482S390 460 350 418Z"/><path d="M785 402C880 440 950 560 962 745L930 748"/></svg><svg class="abs" style="left:1260px;top:842px" width="40" height="38" viewBox="0 0 40 38" fill="none" stroke="#4b4c54" stroke-width="2.1" stroke-linejoin="round"><path d="M32.49 20.68 L35.88 22.68 L33.83 27.63 L30.02 26.64 L27.64 29.02 L28.63 32.83 L23.68 34.88 L21.68 31.49 L18.32 31.49 L16.32 34.88 L11.37 32.83 L12.36 29.02 L9.98 26.64 L6.17 27.63 L4.12 22.68 L7.51 20.68 L7.51 17.32 L4.12 15.32 L6.17 10.37 L9.98 11.36 L12.36 8.98 L11.37 5.17 L16.32 3.12 L18.32 6.51 L21.68 6.51 L23.68 3.12 L28.63 5.17 L27.64 8.98 L30.02 11.36 L33.83 10.37 L35.88 15.32 L32.49 17.32Z"/><circle cx="20" cy="19" r="6.5" stroke-width="1.3"/></svg><div class="abs" style="left:1087px;top:882px;width:80px;text-align:center;font-size:9px;font-weight:bold;color:#fff;letter-spacing:-0.13px">AUTOMATIC</div><div class="abs" style="left:1163.5px;top:882px;width:80px;text-align:center;font-size:9px;font-weight:bold;color:#fff;letter-spacing:-0.5px">MANUAL</div><div class="abs" style="left:1239.5px;top:882px;width:80px;text-align:center;font-size:9px;font-weight:bold;color:#fff;letter-spacing:-0.25px">MAINT/NCE</div><div class="abs" style="left:1331px;top:878px;width:103px;height:14px;border:1px solid #34363e;border-left:0;color:#42444c;font-size:12px;line-height:13px;letter-spacing:3.55px;white-space:nowrap;padding-left:1px;overflow:hidden"><span style="font-weight:bold;letter-spacing:2px">I</span>CONCRETE</div><div class="abs" id="dlg" style="left:207px;top:141px;width:1026px;height:618px;overflow:hidden;background:linear-gradient(57deg,#1a1c27 0,#1b1d28 42%,#252938 57%,#2c3143 70%,#2f3548 82%)"><div class="abs" style="left:0;top:0;width:1026px;height:22px;background:linear-gradient(to right,#1d1f2c 0,#1d1f2c 430px,#262a3a 700px,#2e3446 950px)"></div><div class="abs" style="left:0;top:22px;width:1026px;height:1px;background:#4a5066"></div><div class="abs" style="left:15px;top:4px;font-size:14px;line-height:17px;color:#9c9ea8;white-space:nowrap">System Settings</div><div class="abs" style="left:917px;top:6px;width:77px;height:11px;border:1px solid #444956;border-left:0;color:#474c59;font-size:10px;line-height:10px;letter-spacing:2.350px;white-space:nowrap;overflow:hidden"><span style="font-weight:bold;letter-spacing:1.5px">I</span>CONCRETE</div><svg class="abs" style="left:1003px;top:1.5px" width="19" height="19" viewBox="-9.5 -9.5 19 19"><circle r="9" fill="#9d564f"/><path d="M-3.7 -3.7l7.4 7.4M3.7 -3.7l-7.4 7.4" stroke="#2a2030" stroke-width="2.7" stroke-linecap="round"/></svg><div class="abs" style="left:1px;top:24px;width:263px;height:594px;background:#fff;overflow:hidden"><div class="abs" style="left:12px;top:11px;width:1px;height:68px;background:repeating-linear-gradient(to bottom,#8e8e8e 0 1px,transparent 1px 2px)"></div><div class="abs" style="left:31px;top:90px;width:1px;height:7px;background:repeating-linear-gradient(to bottom,#8e8e8e 0 1px,transparent 1px 2px)"></div><div class="abs" style="left:50px;top:108px;width:1px;height:475px;background:repeating-linear-gradient(to bottom,#8e8e8e 0 1px,transparent 1px 2px)"></div><div class="abs" style="left:69px;top:126px;width:1px;height:331px;background:repeating-linear-gradient(to bottom,#8e8e8e 0 1px,transparent 1px 2px)"></div><div class="abs" style="left:69px;top:558px;width:1px;height:12px;background:repeating-linear-gradient(to bottom,#8e8e8e 0 1px,transparent 1px 2px)"></div><div class="abs" style="left:88px;top:144px;width:1px;height:7px;background:repeating-linear-gradient(to bottom,#8e8e8e 0 1px,transparent 1px 2px)"></div><div class="abs" style="left:107px;top:162px;width:1px;height:102px;background:repeating-linear-gradient(to bottom,#8e8e8e 0 1px,transparent 1px 2px)"></div><div class="abs" style="left:88px;top:288px;width:1px;height:7px;background:repeating-linear-gradient(to bottom,#8e8e8e 0 1px,transparent 1px 2px)"></div><div class="abs" style="left:107px;top:306px;width:1px;height:66px;background:repeating-linear-gradient(to bottom,#8e8e8e 0 1px,transparent 1px 2px)"></div><div class="abs" style="left:88px;top:396px;width:1px;height:7px;background:repeating-linear-gradient(to bottom,#8e8e8e 0 1px,transparent 1px 2px)"></div><div class="abs" style="left:107px;top:414px;width:1px;height:30px;background:repeating-linear-gradient(to bottom,#8e8e8e 0 1px,transparent 1px 2px)"></div><div class="abs" style="left:88px;top:468px;width:1px;height:7px;background:repeating-linear-gradient(to bottom,#8e8e8e 0 1px,transparent 1px 2px)"></div><div class="abs" style="left:107px;top:486px;width:1px;height:48px;background:repeating-linear-gradient(to bottom,#8e8e8e 0 1px,transparent 1px 2px)"></div><svg width="0" height="0" style="position:absolute"><defs><linearGradient id="wg" x1="0" y1="0" x2="1" y2="1"><stop offset="0" stop-color="#b9b9b9"/><stop offset=".5" stop-color="#8a8a8a"/><stop offset="1" stop-color="#5a5a5a"/></linearGradient><linearGradient id="fg" x1="0" y1="0" x2="1" y2="1"><stop offset="0" stop-color="#6fb6f0"/><stop offset=".45" stop-color="#2a6fd0"/><stop offset="1" stop-color="#123a94"/></linearGradient></defs></svg><div class="abs" style="left:13px;top:11px;width:11px;height:1px;background:repeating-linear-gradient(to right,#8e8e8e 0 1px,transparent 1px 2px)"></div><svg class="abs" style="left:25px;top:2px;overflow:visible" width="16" height="16" viewBox="0 0 16 16"><path d="M3.6 .3l.9 0 .4 1.3 1 .4 1.2-.7.7 .7-.7 1.2.4 1 1.3.4v.9l-1.3.4-.4 1 .7 1.2-.7.7-1.2-.7-1 .4-.4 1.3h-.9l-.4-1.3-1-.4-1.2.7-.7-.7.7-1.2-.4-1L-.6 5.5v-.9l1.3-.4.4-1-.7-1.2.7-.7 1.2.7 1-.4z" fill="#ececec" stroke="#cfcfcf" stroke-width=".5"/><circle cx="4" cy="5" r="1.7" fill="#fff" stroke="#d6d6d6" stroke-width=".5"/><g transform="translate(2.2 4.2) scale(.74)"><path d="M2.300 14L9.600 6.7" stroke="#7c7c7c" stroke-width="3.1" stroke-linecap="round"/><path d="M2.700 13L9.300 6.4" stroke="#a4a4a4" stroke-width=".8" stroke-linecap="round"/><path d="M8.300 5.800c-.8-2.300.2-4.200 2.300-5l1.700-.2 1 1.600 1.800-1.400c.9 2 .6 4.100-1.100 5.500-1.400 1.200-3.600 1.300-5.700-.5z" fill="#8a8a8a"/><circle cx="11.4" cy="4.3" r="1.5" fill="#b4b4b4"/><path d="M12.500 2.300l1.900-1.5" stroke="#c9c9c9" stroke-width=".8"/></g></svg><div class="abs" style="left:44px;top:1px;font-size:11.5px;line-height:18px;letter-spacing:0;white-space:nowrap;color:#050608">GENERAL SYSTEM SETTINGS</div><div class="abs" style="left:13px;top:29px;width:11px;height:1px;background:repeating-linear-gradient(to right,#8e8e8e 0 1px,transparent 1px 2px)"></div><svg class="abs" style="left:25px;top:20px;overflow:visible" width="16" height="16" viewBox="0 0 16 16"><path d="M3.6 .3l.9 0 .4 1.3 1 .4 1.2-.7.7 .7-.7 1.2.4 1 1.3.4v.9l-1.3.4-.4 1 .7 1.2-.7.7-1.2-.7-1 .4-.4 1.3h-.9l-.4-1.3-1-.4-1.2.7-.7-.7.7-1.2-.4-1L-.6 5.5v-.9l1.3-.4.4-1-.7-1.2.7-.7 1.2.7 1-.4z" fill="#ececec" stroke="#cfcfcf" stroke-width=".5"/><circle cx="4" cy="5" r="1.7" fill="#fff" stroke="#d6d6d6" stroke-width=".5"/><g transform="translate(2.2 4.2) scale(.74)"><path d="M2.300 14L9.600 6.7" stroke="#7c7c7c" stroke-width="3.1" stroke-linecap="round"/><path d="M2.700 13L9.300 6.4" stroke="#a4a4a4" stroke-width=".8" stroke-linecap="round"/><path d="M8.300 5.800c-.8-2.300.2-4.200 2.300-5l1.700-.2 1 1.600 1.800-1.400c.9 2 .6 4.100-1.100 5.500-1.400 1.200-3.600 1.300-5.700-.5z" fill="#8a8a8a"/><circle cx="11.4" cy="4.3" r="1.5" fill="#b4b4b4"/><path d="M12.500 2.300l1.900-1.5" stroke="#c9c9c9" stroke-width=".8"/></g></svg><div class="abs" style="left:42px;top:19px;height:18px;padding:0 2px;background:#3399ff;color:#fff;font-size:11.5px;line-height:18px;letter-spacing:0;white-space:nowrap">GENERAL IO SETTINGS</div><div class="abs" style="left:13px;top:47px;width:11px;height:1px;background:repeating-linear-gradient(to right,#8e8e8e 0 1px,transparent 1px 2px)"></div><svg class="abs" style="left:25px;top:38px;overflow:visible" width="16" height="16" viewBox="0 0 16 16"><path d="M3.6 .3l.9 0 .4 1.3 1 .4 1.2-.7.7 .7-.7 1.2.4 1 1.3.4v.9l-1.3.4-.4 1 .7 1.2-.7.7-1.2-.7-1 .4-.4 1.3h-.9l-.4-1.3-1-.4-1.2.7-.7-.7.7-1.2-.4-1L-.6 5.5v-.9l1.3-.4.4-1-.7-1.2.7-.7 1.2.7 1-.4z" fill="#ececec" stroke="#cfcfcf" stroke-width=".5"/><circle cx="4" cy="5" r="1.7" fill="#fff" stroke="#d6d6d6" stroke-width=".5"/><g transform="translate(2.2 4.2) scale(.74)"><path d="M2.300 14L9.600 6.7" stroke="#7c7c7c" stroke-width="3.1" stroke-linecap="round"/><path d="M2.700 13L9.300 6.4" stroke="#a4a4a4" stroke-width=".8" stroke-linecap="round"/><path d="M8.300 5.800c-.8-2.300.2-4.200 2.300-5l1.700-.2 1 1.600 1.800-1.400c.9 2 .6 4.100-1.100 5.500-1.400 1.200-3.600 1.300-5.700-.5z" fill="#8a8a8a"/><circle cx="11.4" cy="4.3" r="1.5" fill="#b4b4b4"/><path d="M12.500 2.300l1.900-1.5" stroke="#c9c9c9" stroke-width=".8"/></g></svg><div class="abs" style="left:44px;top:37px;font-size:11.5px;line-height:18px;letter-spacing:0;white-space:nowrap;color:#050608">EXTERNAL CALLS SETTINGS</div><div class="abs" style="left:13px;top:65px;width:11px;height:1px;background:repeating-linear-gradient(to right,#8e8e8e 0 1px,transparent 1px 2px)"></div><svg class="abs" style="left:25px;top:56px;overflow:visible" width="16" height="16" viewBox="0 0 16 16"><path d="M3.6 .3l.9 0 .4 1.3 1 .4 1.2-.7.7 .7-.7 1.2.4 1 1.3.4v.9l-1.3.4-.4 1 .7 1.2-.7.7-1.2-.7-1 .4-.4 1.3h-.9l-.4-1.3-1-.4-1.2.7-.7-.7.7-1.2-.4-1L-.6 5.5v-.9l1.3-.4.4-1-.7-1.2.7-.7 1.2.7 1-.4z" fill="#ececec" stroke="#cfcfcf" stroke-width=".5"/><circle cx="4" cy="5" r="1.7" fill="#fff" stroke="#d6d6d6" stroke-width=".5"/><g transform="translate(2.2 4.2) scale(.74)"><path d="M2.300 14L9.600 6.7" stroke="#7c7c7c" stroke-width="3.1" stroke-linecap="round"/><path d="M2.700 13L9.300 6.4" stroke="#a4a4a4" stroke-width=".8" stroke-linecap="round"/><path d="M8.300 5.800c-.8-2.300.2-4.200 2.300-5l1.700-.2 1 1.600 1.800-1.400c.9 2 .6 4.100-1.100 5.500-1.400 1.200-3.600 1.300-5.700-.5z" fill="#8a8a8a"/><circle cx="11.4" cy="4.3" r="1.5" fill="#b4b4b4"/><path d="M12.500 2.300l1.900-1.5" stroke="#c9c9c9" stroke-width=".8"/></g></svg><div class="abs" style="left:44px;top:55px;font-size:11.5px;line-height:18px;letter-spacing:0;white-space:nowrap;color:#050608">ANALOGS SETTINGS</div><div class="abs" style="left:19px;top:83px;width:5px;height:1px;background:repeating-linear-gradient(to right,#8e8e8e 0 1px,transparent 1px 2px)"></div><div class="abs" style="left:8px;top:79px;width:9px;height:9px;border:1px solid #979797;border-radius:1px;background:linear-gradient(135deg,#fff,#e3e3e3)"><div style="position:absolute;left:1px;top:3px;width:5px;height:1px;background:#3a4bb0"></div></div><svg class="abs" style="left:25px;top:74px;overflow:visible" width="16" height="16" viewBox="0 0 16 16"><path d="M1 6.2L8.5 1.8l1.6 1.5 3.6-2 .6 9.5L4 15.6z" fill="#173f9c"/><path d="M1 6.2l5-3 1.8 1.6 5.6-2.6 .9 8.6L4 15.6z" fill="url(#fg)"/><path d="M1.8 8.6l11.8-5M2.5 11l11.4-4.8M3.3 13.4L14.2 8.8" stroke="#a9dbff" stroke-width=".8" opacity=".65"/><g transform="translate(2.5 1.5) scale(.86)"><path d="M2.300 14L9.600 6.7" stroke="#7c7c7c" stroke-width="3.1" stroke-linecap="round"/><path d="M2.700 13L9.300 6.4" stroke="#a4a4a4" stroke-width=".8" stroke-linecap="round"/><path d="M8.300 5.800c-.8-2.300.2-4.200 2.300-5l1.700-.2 1 1.600 1.800-1.400c.9 2 .6 4.100-1.100 5.500-1.400 1.200-3.600 1.300-5.700-.5z" fill="#8a8a8a"/><circle cx="11.4" cy="4.3" r="1.5" fill="#b4b4b4"/><path d="M12.500 2.300l1.900-1.5" stroke="#c9c9c9" stroke-width=".8"/></g></svg><div class="abs" style="left:44px;top:73px;font-size:11.5px;line-height:18px;letter-spacing:0;white-space:nowrap;color:#050608">MIXERS</div><div class="abs" style="left:38px;top:101px;width:5px;height:1px;background:repeating-linear-gradient(to right,#8e8e8e 0 1px,transparent 1px 2px)"></div><div class="abs" style="left:27px;top:97px;width:9px;height:9px;border:1px solid #979797;border-radius:1px;background:linear-gradient(135deg,#fff,#e3e3e3)"><div style="position:absolute;left:1px;top:3px;width:5px;height:1px;background:#3a4bb0"></div></div><svg class="abs" style="left:44px;top:92px;overflow:visible" width="16" height="16" viewBox="0 0 16 16"><path d="M2.300 14L9.600 6.7" stroke="#7c7c7c" stroke-width="3.1" stroke-linecap="round"/><path d="M2.700 13L9.300 6.4" stroke="#a4a4a4" stroke-width=".8" stroke-linecap="round"/><path d="M8.300 5.800c-.8-2.300.2-4.200 2.300-5l1.700-.2 1 1.600 1.800-1.400c.9 2 .6 4.100-1.100 5.500-1.400 1.200-3.600 1.300-5.700-.5z" fill="#8a8a8a"/><circle cx="11.4" cy="4.3" r="1.5" fill="#b4b4b4"/><path d="M12.500 2.300l1.900-1.5" stroke="#c9c9c9" stroke-width=".8"/></svg><div class="abs" style="left:63px;top:91px;font-size:11.5px;line-height:18px;letter-spacing:0;white-space:nowrap;color:#050608">MIXER</div><div class="abs" style="left:57px;top:119px;width:5px;height:1px;background:repeating-linear-gradient(to right,#8e8e8e 0 1px,transparent 1px 2px)"></div><div class="abs" style="left:46px;top:115px;width:9px;height:9px;border:1px solid #979797;border-radius:1px;background:linear-gradient(135deg,#fff,#e3e3e3)"><div style="position:absolute;left:1px;top:3px;width:5px;height:1px;background:#3a4bb0"></div></div><svg class="abs" style="left:63px;top:110px;overflow:visible" width="16" height="16" viewBox="0 0 16 16"><path d="M1 6.2L8.5 1.8l1.6 1.5 3.6-2 .6 9.5L4 15.6z" fill="#173f9c"/><path d="M1 6.2l5-3 1.8 1.6 5.6-2.6 .9 8.6L4 15.6z" fill="url(#fg)"/><path d="M1.8 8.6l11.8-5M2.5 11l11.4-4.8M3.3 13.4L14.2 8.8" stroke="#a9dbff" stroke-width=".8" opacity=".65"/></svg><div class="abs" style="left:82px;top:109px;font-size:11.5px;line-height:18px;letter-spacing:0;white-space:nowrap;color:#050608">SCALES</div><div class="abs" style="left:76px;top:137px;width:5px;height:1px;background:repeating-linear-gradient(to right,#8e8e8e 0 1px,transparent 1px 2px)"></div><div class="abs" style="left:65px;top:133px;width:9px;height:9px;border:1px solid #979797;border-radius:1px;background:linear-gradient(135deg,#fff,#e3e3e3)"><div style="position:absolute;left:1px;top:3px;width:5px;height:1px;background:#3a4bb0"></div></div><svg class="abs" style="left:82px;top:128px;overflow:visible" width="16" height="16" viewBox="0 0 16 16"><path d="M2.300 14L9.600 6.7" stroke="#7c7c7c" stroke-width="3.1" stroke-linecap="round"/><path d="M2.700 13L9.300 6.4" stroke="#a4a4a4" stroke-width=".8" stroke-linecap="round"/><path d="M8.300 5.800c-.8-2.300.2-4.200 2.300-5l1.700-.2 1 1.600 1.800-1.400c.9 2 .6 4.100-1.100 5.500-1.400 1.200-3.600 1.300-5.700-.5z" fill="#8a8a8a"/><circle cx="11.4" cy="4.3" r="1.5" fill="#b4b4b4"/><path d="M12.500 2.300l1.900-1.5" stroke="#c9c9c9" stroke-width=".8"/></svg><div class="abs" style="left:101px;top:127px;font-size:11.5px;line-height:18px;letter-spacing:0;white-space:nowrap;color:#050608">AGGREGATE SCALE</div><div class="abs" style="left:95px;top:155px;width:5px;height:1px;background:repeating-linear-gradient(to right,#8e8e8e 0 1px,transparent 1px 2px)"></div><div class="abs" style="left:84px;top:151px;width:9px;height:9px;border:1px solid #979797;border-radius:1px;background:linear-gradient(135deg,#fff,#e3e3e3)"><div style="position:absolute;left:1px;top:3px;width:5px;height:1px;background:#3a4bb0"></div></div><svg class="abs" style="left:101px;top:146px;overflow:visible" width="16" height="16" viewBox="0 0 16 16"><path d="M1 6.2L8.5 1.8l1.6 1.5 3.6-2 .6 9.5L4 15.6z" fill="#173f9c"/><path d="M1 6.2l5-3 1.8 1.6 5.6-2.6 .9 8.6L4 15.6z" fill="url(#fg)"/><path d="M1.8 8.6l11.8-5M2.5 11l11.4-4.8M3.3 13.4L14.2 8.8" stroke="#a9dbff" stroke-width=".8" opacity=".65"/></svg><div class="abs" style="left:120px;top:145px;font-size:11.5px;line-height:18px;letter-spacing:0;white-space:nowrap;color:#050608">STORAGES</div><div class="abs" style="left:108px;top:173px;width:11px;height:1px;background:repeating-linear-gradient(to right,#8e8e8e 0 1px,transparent 1px 2px)"></div><svg class="abs" style="left:120px;top:164px;overflow:visible" width="16" height="16" viewBox="0 0 16 16"><path d="M2.300 14L9.600 6.7" stroke="#7c7c7c" stroke-width="3.1" stroke-linecap="round"/><path d="M2.700 13L9.300 6.4" stroke="#a4a4a4" stroke-width=".8" stroke-linecap="round"/><path d="M8.300 5.800c-.8-2.300.2-4.200 2.300-5l1.700-.2 1 1.600 1.800-1.400c.9 2 .6 4.100-1.100 5.500-1.400 1.200-3.600 1.300-5.700-.5z" fill="#8a8a8a"/><circle cx="11.4" cy="4.3" r="1.5" fill="#b4b4b4"/><path d="M12.500 2.300l1.900-1.5" stroke="#c9c9c9" stroke-width=".8"/></svg><div class="abs" style="left:139px;top:163px;font-size:11.5px;line-height:18px;letter-spacing:.14px;white-space:nowrap;color:#050608">Aggregate 1</div><div class="abs" style="left:108px;top:191px;width:11px;height:1px;background:repeating-linear-gradient(to right,#8e8e8e 0 1px,transparent 1px 2px)"></div><svg class="abs" style="left:120px;top:182px;overflow:visible" width="16" height="16" viewBox="0 0 16 16"><path d="M2.300 14L9.600 6.7" stroke="#7c7c7c" stroke-width="3.1" stroke-linecap="round"/><path d="M2.700 13L9.300 6.4" stroke="#a4a4a4" stroke-width=".8" stroke-linecap="round"/><path d="M8.300 5.800c-.8-2.300.2-4.200 2.300-5l1.700-.2 1 1.600 1.800-1.400c.9 2 .6 4.100-1.100 5.500-1.400 1.200-3.600 1.300-5.700-.5z" fill="#8a8a8a"/><circle cx="11.4" cy="4.3" r="1.5" fill="#b4b4b4"/><path d="M12.500 2.300l1.900-1.5" stroke="#c9c9c9" stroke-width=".8"/></svg><div class="abs" style="left:139px;top:181px;font-size:11.5px;line-height:18px;letter-spacing:.14px;white-space:nowrap;color:#050608">Aggregate 2</div><div class="abs" style="left:108px;top:209px;width:11px;height:1px;background:repeating-linear-gradient(to right,#8e8e8e 0 1px,transparent 1px 2px)"></div><svg class="abs" style="left:120px;top:200px;overflow:visible" width="16" height="16" viewBox="0 0 16 16"><path d="M2.300 14L9.600 6.7" stroke="#7c7c7c" stroke-width="3.1" stroke-linecap="round"/><path d="M2.700 13L9.300 6.4" stroke="#a4a4a4" stroke-width=".8" stroke-linecap="round"/><path d="M8.300 5.800c-.8-2.300.2-4.200 2.300-5l1.700-.2 1 1.600 1.800-1.400c.9 2 .6 4.100-1.100 5.500-1.400 1.200-3.600 1.300-5.700-.5z" fill="#8a8a8a"/><circle cx="11.4" cy="4.3" r="1.5" fill="#b4b4b4"/><path d="M12.500 2.300l1.900-1.5" stroke="#c9c9c9" stroke-width=".8"/></svg><div class="abs" style="left:139px;top:199px;font-size:11.5px;line-height:18px;letter-spacing:.14px;white-space:nowrap;color:#050608">Aggregate 3</div><div class="abs" style="left:108px;top:227px;width:11px;height:1px;background:repeating-linear-gradient(to right,#8e8e8e 0 1px,transparent 1px 2px)"></div><svg class="abs" style="left:120px;top:218px;overflow:visible" width="16" height="16" viewBox="0 0 16 16"><path d="M2.300 14L9.600 6.7" stroke="#7c7c7c" stroke-width="3.1" stroke-linecap="round"/><path d="M2.700 13L9.300 6.4" stroke="#a4a4a4" stroke-width=".8" stroke-linecap="round"/><path d="M8.300 5.800c-.8-2.300.2-4.200 2.300-5l1.700-.2 1 1.600 1.800-1.400c.9 2 .6 4.100-1.100 5.500-1.400 1.200-3.600 1.300-5.700-.5z" fill="#8a8a8a"/><circle cx="11.4" cy="4.3" r="1.5" fill="#b4b4b4"/><path d="M12.500 2.300l1.900-1.5" stroke="#c9c9c9" stroke-width=".8"/></svg><div class="abs" style="left:139px;top:217px;font-size:11.5px;line-height:18px;letter-spacing:.14px;white-space:nowrap;color:#050608">Aggregate 4</div><div class="abs" style="left:108px;top:245px;width:11px;height:1px;background:repeating-linear-gradient(to right,#8e8e8e 0 1px,transparent 1px 2px)"></div><svg class="abs" style="left:120px;top:236px;overflow:visible" width="16" height="16" viewBox="0 0 16 16"><path d="M2.300 14L9.600 6.7" stroke="#7c7c7c" stroke-width="3.1" stroke-linecap="round"/><path d="M2.700 13L9.300 6.4" stroke="#a4a4a4" stroke-width=".8" stroke-linecap="round"/><path d="M8.300 5.800c-.8-2.300.2-4.200 2.300-5l1.700-.2 1 1.600 1.800-1.400c.9 2 .6 4.100-1.100 5.500-1.400 1.200-3.600 1.300-5.700-.5z" fill="#8a8a8a"/><circle cx="11.4" cy="4.3" r="1.5" fill="#b4b4b4"/><path d="M12.500 2.300l1.900-1.5" stroke="#c9c9c9" stroke-width=".8"/></svg><div class="abs" style="left:139px;top:235px;font-size:11.5px;line-height:18px;letter-spacing:.14px;white-space:nowrap;color:#050608">Aggregate 5</div><div class="abs" style="left:108px;top:263px;width:11px;height:1px;background:repeating-linear-gradient(to right,#8e8e8e 0 1px,transparent 1px 2px)"></div><svg class="abs" style="left:120px;top:254px;overflow:visible" width="16" height="16" viewBox="0 0 16 16"><path d="M2.300 14L9.600 6.7" stroke="#7c7c7c" stroke-width="3.1" stroke-linecap="round"/><path d="M2.700 13L9.300 6.4" stroke="#a4a4a4" stroke-width=".8" stroke-linecap="round"/><path d="M8.300 5.800c-.8-2.300.2-4.200 2.300-5l1.700-.2 1 1.600 1.800-1.400c.9 2 .6 4.100-1.100 5.500-1.400 1.200-3.600 1.300-5.700-.5z" fill="#8a8a8a"/><circle cx="11.4" cy="4.3" r="1.5" fill="#b4b4b4"/><path d="M12.500 2.300l1.900-1.5" stroke="#c9c9c9" stroke-width=".8"/></svg><div class="abs" style="left:139px;top:253px;font-size:11.5px;line-height:18px;letter-spacing:.14px;white-space:nowrap;color:#050608">Aggregate 6</div><div class="abs" style="left:76px;top:281px;width:5px;height:1px;background:repeating-linear-gradient(to right,#8e8e8e 0 1px,transparent 1px 2px)"></div><div class="abs" style="left:65px;top:277px;width:9px;height:9px;border:1px solid #979797;border-radius:1px;background:linear-gradient(135deg,#fff,#e3e3e3)"><div style="position:absolute;left:1px;top:3px;width:5px;height:1px;background:#3a4bb0"></div></div><svg class="abs" style="left:82px;top:272px;overflow:visible" width="16" height="16" viewBox="0 0 16 16"><path d="M2.300 14L9.600 6.7" stroke="#7c7c7c" stroke-width="3.1" stroke-linecap="round"/><path d="M2.700 13L9.300 6.4" stroke="#a4a4a4" stroke-width=".8" stroke-linecap="round"/><path d="M8.300 5.800c-.8-2.300.2-4.200 2.300-5l1.700-.2 1 1.600 1.800-1.400c.9 2 .6 4.100-1.100 5.500-1.400 1.200-3.600 1.300-5.700-.5z" fill="#8a8a8a"/><circle cx="11.4" cy="4.3" r="1.5" fill="#b4b4b4"/><path d="M12.500 2.300l1.900-1.5" stroke="#c9c9c9" stroke-width=".8"/></svg><div class="abs" style="left:101px;top:271px;font-size:11.5px;line-height:18px;letter-spacing:0;white-space:nowrap;color:#050608">CEMENT SCALE</div><div class="abs" style="left:95px;top:299px;width:5px;height:1px;background:repeating-linear-gradient(to right,#8e8e8e 0 1px,transparent 1px 2px)"></div><div class="abs" style="left:84px;top:295px;width:9px;height:9px;border:1px solid #979797;border-radius:1px;background:linear-gradient(135deg,#fff,#e3e3e3)"><div style="position:absolute;left:1px;top:3px;width:5px;height:1px;background:#3a4bb0"></div></div><svg class="abs" style="left:101px;top:290px;overflow:visible" width="16" height="16" viewBox="0 0 16 16"><path d="M1 6.2L8.5 1.8l1.6 1.5 3.6-2 .6 9.5L4 15.6z" fill="#173f9c"/><path d="M1 6.2l5-3 1.8 1.6 5.6-2.6 .9 8.6L4 15.6z" fill="url(#fg)"/><path d="M1.8 8.6l11.8-5M2.5 11l11.4-4.8M3.3 13.4L14.2 8.8" stroke="#a9dbff" stroke-width=".8" opacity=".65"/></svg><div class="abs" style="left:120px;top:289px;font-size:11.5px;line-height:18px;letter-spacing:0;white-space:nowrap;color:#050608">STORAGES</div><div class="abs" style="left:108px;top:317px;width:11px;height:1px;background:repeating-linear-gradient(to right,#8e8e8e 0 1px,transparent 1px 2px)"></div><svg class="abs" style="left:120px;top:308px;overflow:visible" width="16" height="16" viewBox="0 0 16 16"><path d="M2.300 14L9.600 6.7" stroke="#7c7c7c" stroke-width="3.1" stroke-linecap="round"/><path d="M2.700 13L9.300 6.4" stroke="#a4a4a4" stroke-width=".8" stroke-linecap="round"/><path d="M8.300 5.800c-.8-2.300.2-4.200 2.300-5l1.700-.2 1 1.600 1.800-1.400c.9 2 .6 4.100-1.100 5.500-1.400 1.200-3.600 1.300-5.700-.5z" fill="#8a8a8a"/><circle cx="11.4" cy="4.3" r="1.5" fill="#b4b4b4"/><path d="M12.500 2.300l1.900-1.5" stroke="#c9c9c9" stroke-width=".8"/></svg><div class="abs" style="left:139px;top:307px;font-size:11.5px;line-height:18px;letter-spacing:.14px;white-space:nowrap;color:#050608">Cement 1</div><div class="abs" style="left:108px;top:335px;width:11px;height:1px;background:repeating-linear-gradient(to right,#8e8e8e 0 1px,transparent 1px 2px)"></div><svg class="abs" style="left:120px;top:326px;overflow:visible" width="16" height="16" viewBox="0 0 16 16"><path d="M2.300 14L9.600 6.7" stroke="#7c7c7c" stroke-width="3.1" stroke-linecap="round"/><path d="M2.700 13L9.300 6.4" stroke="#a4a4a4" stroke-width=".8" stroke-linecap="round"/><path d="M8.300 5.800c-.8-2.300.2-4.200 2.300-5l1.700-.2 1 1.600 1.800-1.400c.9 2 .6 4.100-1.100 5.500-1.400 1.200-3.600 1.300-5.700-.5z" fill="#8a8a8a"/><circle cx="11.4" cy="4.3" r="1.5" fill="#b4b4b4"/><path d="M12.500 2.300l1.900-1.5" stroke="#c9c9c9" stroke-width=".8"/></svg><div class="abs" style="left:139px;top:325px;font-size:11.5px;line-height:18px;letter-spacing:.14px;white-space:nowrap;color:#050608">Cement 2</div><div class="abs" style="left:108px;top:353px;width:11px;height:1px;background:repeating-linear-gradient(to right,#8e8e8e 0 1px,transparent 1px 2px)"></div><svg class="abs" style="left:120px;top:344px;overflow:visible" width="16" height="16" viewBox="0 0 16 16"><path d="M2.300 14L9.600 6.7" stroke="#7c7c7c" stroke-width="3.1" stroke-linecap="round"/><path d="M2.700 13L9.300 6.4" stroke="#a4a4a4" stroke-width=".8" stroke-linecap="round"/><path d="M8.300 5.800c-.8-2.300.2-4.200 2.300-5l1.700-.2 1 1.600 1.800-1.400c.9 2 .6 4.100-1.100 5.500-1.400 1.200-3.600 1.300-5.700-.5z" fill="#8a8a8a"/><circle cx="11.4" cy="4.3" r="1.5" fill="#b4b4b4"/><path d="M12.500 2.300l1.900-1.5" stroke="#c9c9c9" stroke-width=".8"/></svg><div class="abs" style="left:139px;top:343px;font-size:11.5px;line-height:18px;letter-spacing:.14px;white-space:nowrap;color:#050608">Cement 3</div><div class="abs" style="left:108px;top:371px;width:11px;height:1px;background:repeating-linear-gradient(to right,#8e8e8e 0 1px,transparent 1px 2px)"></div><svg class="abs" style="left:120px;top:362px;overflow:visible" width="16" height="16" viewBox="0 0 16 16"><path d="M2.300 14L9.600 6.7" stroke="#7c7c7c" stroke-width="3.1" stroke-linecap="round"/><path d="M2.700 13L9.300 6.4" stroke="#a4a4a4" stroke-width=".8" stroke-linecap="round"/><path d="M8.300 5.800c-.8-2.300.2-4.200 2.300-5l1.700-.2 1 1.600 1.800-1.400c.9 2 .6 4.100-1.100 5.500-1.400 1.200-3.600 1.300-5.700-.5z" fill="#8a8a8a"/><circle cx="11.4" cy="4.3" r="1.5" fill="#b4b4b4"/><path d="M12.500 2.300l1.900-1.5" stroke="#c9c9c9" stroke-width=".8"/></svg><div class="abs" style="left:139px;top:361px;font-size:11.5px;line-height:18px;letter-spacing:.14px;white-space:nowrap;color:#050608">Cement 4</div><div class="abs" style="left:76px;top:389px;width:5px;height:1px;background:repeating-linear-gradient(to right,#8e8e8e 0 1px,transparent 1px 2px)"></div><div class="abs" style="left:65px;top:385px;width:9px;height:9px;border:1px solid #979797;border-radius:1px;background:linear-gradient(135deg,#fff,#e3e3e3)"><div style="position:absolute;left:1px;top:3px;width:5px;height:1px;background:#3a4bb0"></div></div><svg class="abs" style="left:82px;top:380px;overflow:visible" width="16" height="16" viewBox="0 0 16 16"><path d="M2.300 14L9.600 6.7" stroke="#7c7c7c" stroke-width="3.1" stroke-linecap="round"/><path d="M2.700 13L9.300 6.4" stroke="#a4a4a4" stroke-width=".8" stroke-linecap="round"/><path d="M8.300 5.800c-.8-2.300.2-4.200 2.300-5l1.700-.2 1 1.600 1.800-1.400c.9 2 .6 4.100-1.100 5.500-1.400 1.200-3.600 1.300-5.700-.5z" fill="#8a8a8a"/><circle cx="11.4" cy="4.3" r="1.5" fill="#b4b4b4"/><path d="M12.500 2.300l1.900-1.5" stroke="#c9c9c9" stroke-width=".8"/></svg><div class="abs" style="left:101px;top:379px;font-size:11.5px;line-height:18px;letter-spacing:0;white-space:nowrap;color:#050608">WATER SCALE</div><div class="abs" style="left:95px;top:407px;width:5px;height:1px;background:repeating-linear-gradient(to right,#8e8e8e 0 1px,transparent 1px 2px)"></div><div class="abs" style="left:84px;top:403px;width:9px;height:9px;border:1px solid #979797;border-radius:1px;background:linear-gradient(135deg,#fff,#e3e3e3)"><div style="position:absolute;left:1px;top:3px;width:5px;height:1px;background:#3a4bb0"></div></div><svg class="abs" style="left:101px;top:398px;overflow:visible" width="16" height="16" viewBox="0 0 16 16"><path d="M1 6.2L8.5 1.8l1.6 1.5 3.6-2 .6 9.5L4 15.6z" fill="#173f9c"/><path d="M1 6.2l5-3 1.8 1.6 5.6-2.6 .9 8.6L4 15.6z" fill="url(#fg)"/><path d="M1.8 8.6l11.8-5M2.5 11l11.4-4.8M3.3 13.4L14.2 8.8" stroke="#a9dbff" stroke-width=".8" opacity=".65"/></svg><div class="abs" style="left:120px;top:397px;font-size:11.5px;line-height:18px;letter-spacing:0;white-space:nowrap;color:#050608">STORAGES</div><div class="abs" style="left:108px;top:425px;width:11px;height:1px;background:repeating-linear-gradient(to right,#8e8e8e 0 1px,transparent 1px 2px)"></div><svg class="abs" style="left:120px;top:416px;overflow:visible" width="16" height="16" viewBox="0 0 16 16"><path d="M2.300 14L9.600 6.7" stroke="#7c7c7c" stroke-width="3.1" stroke-linecap="round"/><path d="M2.700 13L9.300 6.4" stroke="#a4a4a4" stroke-width=".8" stroke-linecap="round"/><path d="M8.300 5.800c-.8-2.300.2-4.200 2.300-5l1.700-.2 1 1.600 1.800-1.400c.9 2 .6 4.100-1.100 5.500-1.400 1.200-3.600 1.300-5.700-.5z" fill="#8a8a8a"/><circle cx="11.4" cy="4.3" r="1.5" fill="#b4b4b4"/><path d="M12.500 2.300l1.900-1.5" stroke="#c9c9c9" stroke-width=".8"/></svg><div class="abs" style="left:139px;top:415px;font-size:11.5px;line-height:18px;letter-spacing:.14px;white-space:nowrap;color:#050608">Water 1</div><div class="abs" style="left:108px;top:443px;width:11px;height:1px;background:repeating-linear-gradient(to right,#8e8e8e 0 1px,transparent 1px 2px)"></div><svg class="abs" style="left:120px;top:434px;overflow:visible" width="16" height="16" viewBox="0 0 16 16"><path d="M2.300 14L9.600 6.7" stroke="#7c7c7c" stroke-width="3.1" stroke-linecap="round"/><path d="M2.700 13L9.300 6.4" stroke="#a4a4a4" stroke-width=".8" stroke-linecap="round"/><path d="M8.300 5.800c-.8-2.300.2-4.200 2.300-5l1.700-.2 1 1.600 1.800-1.400c.9 2 .6 4.100-1.100 5.500-1.400 1.200-3.600 1.300-5.700-.5z" fill="#8a8a8a"/><circle cx="11.4" cy="4.3" r="1.5" fill="#b4b4b4"/><path d="M12.500 2.300l1.900-1.5" stroke="#c9c9c9" stroke-width=".8"/></svg><div class="abs" style="left:139px;top:433px;font-size:11.5px;line-height:18px;letter-spacing:.14px;white-space:nowrap;color:#050608">Water 2</div><div class="abs" style="left:76px;top:461px;width:5px;height:1px;background:repeating-linear-gradient(to right,#8e8e8e 0 1px,transparent 1px 2px)"></div><div class="abs" style="left:65px;top:457px;width:9px;height:9px;border:1px solid #979797;border-radius:1px;background:linear-gradient(135deg,#fff,#e3e3e3)"><div style="position:absolute;left:1px;top:3px;width:5px;height:1px;background:#3a4bb0"></div></div><svg class="abs" style="left:82px;top:452px;overflow:visible" width="16" height="16" viewBox="0 0 16 16"><path d="M2.300 14L9.600 6.7" stroke="#7c7c7c" stroke-width="3.1" stroke-linecap="round"/><path d="M2.700 13L9.300 6.4" stroke="#a4a4a4" stroke-width=".8" stroke-linecap="round"/><path d="M8.300 5.800c-.8-2.300.2-4.200 2.300-5l1.700-.2 1 1.600 1.800-1.400c.9 2 .6 4.100-1.100 5.500-1.400 1.200-3.600 1.300-5.700-.5z" fill="#8a8a8a"/><circle cx="11.4" cy="4.3" r="1.5" fill="#b4b4b4"/><path d="M12.500 2.300l1.900-1.5" stroke="#c9c9c9" stroke-width=".8"/></svg><div class="abs" style="left:101px;top:451px;font-size:11.5px;line-height:18px;letter-spacing:0;white-space:nowrap;color:#050608">ADDITIVE SCALE</div><div class="abs" style="left:95px;top:479px;width:5px;height:1px;background:repeating-linear-gradient(to right,#8e8e8e 0 1px,transparent 1px 2px)"></div><div class="abs" style="left:84px;top:475px;width:9px;height:9px;border:1px solid #979797;border-radius:1px;background:linear-gradient(135deg,#fff,#e3e3e3)"><div style="position:absolute;left:1px;top:3px;width:5px;height:1px;background:#3a4bb0"></div></div><svg class="abs" style="left:101px;top:470px;overflow:visible" width="16" height="16" viewBox="0 0 16 16"><path d="M1 6.2L8.5 1.8l1.6 1.5 3.6-2 .6 9.5L4 15.6z" fill="#173f9c"/><path d="M1 6.2l5-3 1.8 1.6 5.6-2.6 .9 8.6L4 15.6z" fill="url(#fg)"/><path d="M1.8 8.6l11.8-5M2.5 11l11.4-4.8M3.3 13.4L14.2 8.8" stroke="#a9dbff" stroke-width=".8" opacity=".65"/></svg><div class="abs" style="left:120px;top:469px;font-size:11.5px;line-height:18px;letter-spacing:0;white-space:nowrap;color:#050608">STORAGES</div><div class="abs" style="left:108px;top:497px;width:11px;height:1px;background:repeating-linear-gradient(to right,#8e8e8e 0 1px,transparent 1px 2px)"></div><svg class="abs" style="left:120px;top:488px;overflow:visible" width="16" height="16" viewBox="0 0 16 16"><path d="M2.300 14L9.600 6.7" stroke="#7c7c7c" stroke-width="3.1" stroke-linecap="round"/><path d="M2.700 13L9.300 6.4" stroke="#a4a4a4" stroke-width=".8" stroke-linecap="round"/><path d="M8.300 5.800c-.8-2.300.2-4.200 2.300-5l1.700-.2 1 1.600 1.800-1.400c.9 2 .6 4.100-1.100 5.500-1.400 1.200-3.600 1.300-5.700-.5z" fill="#8a8a8a"/><circle cx="11.4" cy="4.3" r="1.5" fill="#b4b4b4"/><path d="M12.500 2.300l1.900-1.5" stroke="#c9c9c9" stroke-width=".8"/></svg><div class="abs" style="left:139px;top:487px;font-size:11.5px;line-height:18px;letter-spacing:.14px;white-space:nowrap;color:#050608">Additive 1</div><div class="abs" style="left:108px;top:515px;width:11px;height:1px;background:repeating-linear-gradient(to right,#8e8e8e 0 1px,transparent 1px 2px)"></div><svg class="abs" style="left:120px;top:506px;overflow:visible" width="16" height="16" viewBox="0 0 16 16"><path d="M2.300 14L9.600 6.7" stroke="#7c7c7c" stroke-width="3.1" stroke-linecap="round"/><path d="M2.700 13L9.300 6.4" stroke="#a4a4a4" stroke-width=".8" stroke-linecap="round"/><path d="M8.300 5.800c-.8-2.300.2-4.200 2.300-5l1.700-.2 1 1.600 1.800-1.400c.9 2 .6 4.100-1.100 5.500-1.400 1.200-3.600 1.300-5.700-.5z" fill="#8a8a8a"/><circle cx="11.4" cy="4.3" r="1.5" fill="#b4b4b4"/><path d="M12.500 2.300l1.900-1.5" stroke="#c9c9c9" stroke-width=".8"/></svg><div class="abs" style="left:139px;top:505px;font-size:11.5px;line-height:18px;letter-spacing:.14px;white-space:nowrap;color:#050608">Additive 2</div><div class="abs" style="left:108px;top:533px;width:11px;height:1px;background:repeating-linear-gradient(to right,#8e8e8e 0 1px,transparent 1px 2px)"></div><svg class="abs" style="left:120px;top:524px;overflow:visible" width="16" height="16" viewBox="0 0 16 16"><path d="M2.300 14L9.600 6.7" stroke="#7c7c7c" stroke-width="3.1" stroke-linecap="round"/><path d="M2.700 13L9.300 6.4" stroke="#a4a4a4" stroke-width=".8" stroke-linecap="round"/><path d="M8.300 5.800c-.8-2.300.2-4.200 2.300-5l1.700-.2 1 1.600 1.800-1.400c.9 2 .6 4.100-1.100 5.500-1.400 1.200-3.600 1.300-5.700-.5z" fill="#8a8a8a"/><circle cx="11.4" cy="4.3" r="1.5" fill="#b4b4b4"/><path d="M12.500 2.300l1.900-1.5" stroke="#c9c9c9" stroke-width=".8"/></svg><div class="abs" style="left:139px;top:523px;font-size:11.5px;line-height:18px;letter-spacing:.14px;white-space:nowrap;color:#050608">Additive 3</div><div class="abs" style="left:57px;top:551px;width:5px;height:1px;background:repeating-linear-gradient(to right,#8e8e8e 0 1px,transparent 1px 2px)"></div><div class="abs" style="left:46px;top:547px;width:9px;height:9px;border:1px solid #979797;border-radius:1px;background:linear-gradient(135deg,#fff,#e3e3e3)"><div style="position:absolute;left:1px;top:3px;width:5px;height:1px;background:#3a4bb0"></div></div><svg class="abs" style="left:63px;top:542px;overflow:visible" width="16" height="16" viewBox="0 0 16 16"><path d="M1 6.2L8.5 1.8l1.6 1.5 3.6-2 .6 9.5L4 15.6z" fill="#173f9c"/><path d="M1 6.2l5-3 1.8 1.6 5.6-2.6 .9 8.6L4 15.6z" fill="url(#fg)"/><path d="M1.8 8.6l11.8-5M2.5 11l11.4-4.8M3.3 13.4L14.2 8.8" stroke="#a9dbff" stroke-width=".8" opacity=".65"/></svg><div class="abs" style="left:82px;top:541px;font-size:11.5px;line-height:18px;letter-spacing:0;white-space:nowrap;color:#050608">BELTS</div><div class="abs" style="left:70px;top:569px;width:11px;height:1px;background:repeating-linear-gradient(to right,#8e8e8e 0 1px,transparent 1px 2px)"></div><svg class="abs" style="left:82px;top:560px;overflow:visible" width="16" height="16" viewBox="0 0 16 16"><path d="M2.300 14L9.600 6.7" stroke="#7c7c7c" stroke-width="3.1" stroke-linecap="round"/><path d="M2.700 13L9.300 6.4" stroke="#a4a4a4" stroke-width=".8" stroke-linecap="round"/><path d="M8.300 5.800c-.8-2.300.2-4.200 2.300-5l1.700-.2 1 1.600 1.800-1.400c.9 2 .6 4.100-1.100 5.500-1.400 1.200-3.600 1.300-5.700-.5z" fill="#8a8a8a"/><circle cx="11.4" cy="4.3" r="1.5" fill="#b4b4b4"/><path d="M12.500 2.300l1.900-1.5" stroke="#c9c9c9" stroke-width=".8"/></svg><div class="abs" style="left:101px;top:559px;font-size:11.5px;line-height:18px;letter-spacing:.14px;white-space:nowrap;color:#050608">Converyor Belt</div><div class="abs" style="left:57px;top:587px;width:5px;height:1px;background:repeating-linear-gradient(to right,#8e8e8e 0 1px,transparent 1px 2px)"></div><div class="abs" style="left:46px;top:583px;width:9px;height:9px;border:1px solid #979797;border-radius:1px;background:linear-gradient(135deg,#fff,#e3e3e3)"><div style="position:absolute;left:1px;top:3px;width:5px;height:1px;background:#3a4bb0"></div></div><svg class="abs" style="left:63px;top:578px;overflow:visible" width="16" height="16" viewBox="0 0 16 16"><path d="M1 6.2L8.5 1.8l1.6 1.5 3.6-2 .6 9.5L4 15.6z" fill="#173f9c"/><path d="M1 6.2l5-3 1.8 1.6 5.6-2.6 .9 8.6L4 15.6z" fill="url(#fg)"/><path d="M1.8 8.6l11.8-5M2.5 11l11.4-4.8M3.3 13.4L14.2 8.8" stroke="#a9dbff" stroke-width=".8" opacity=".65"/></svg><div class="abs" style="left:82px;top:577px;font-size:11.5px;line-height:18px;letter-spacing:0;white-space:nowrap;color:#050608">PRE-STORAGES</div><div class="abs" style="left:245px;top:0;width:17px;height:594px;background:#f0f0f0"></div><div class="abs" style="left:245px;top:19px;width:15px;height:507px;border:1px solid #979797;border-radius:2px;background:linear-gradient(to right,#f3f3f3,#e6e6e8 50%,#cbcbcf)"></div><div class="abs" style="left:249px;top:269px;width:7px;height:8px;background:repeating-linear-gradient(to bottom,#5a5a5a 0 1px,#fafafa 1px 2px,transparent 2px 3px)"></div><svg class="abs" style="left:249px;top:7px" width="7" height="5" viewBox="0 0 7 5"><path d="M0 4.5L3.5 .5 7 4.5z" fill="#404040"/></svg><svg class="abs" style="left:249px;top:582px" width="7" height="5" viewBox="0 0 7 5"><path d="M0 .5L3.5 4.5 7 .5z" fill="#404040"/></svg></div><div class="abs" style="left:263px;top:24px;width:1.5px;height:594px;background:#6e6e72"></div><div class="abs" style="left:264.5px;top:24px;width:7px;height:594px;background:linear-gradient(to right,#a3acce,#9ba5c7 60%,#8e98bc)"></div><div class="abs" style="left:271px;top:48px;width:755px;text-align:center;font-size:24px;line-height:30px;letter-spacing:.95px;color:#9a9ba2;white-space:nowrap;text-indent:-5px">General IO Settings</div><div class="abs" style="left:287px;top:94px;width:720px;height:448px;background:#d2d2d2;overflow:hidden"><div class="abs" style="left:0;top:0;width:720px;height:18px;background:#b0c4de"></div><div class="abs" style="left:0;top:18px;width:720px;height:1px;background:#5f6062"></div><div class="abs" style="left:0;top:19px;width:610px;height:19px;background:#f0f0f0"></div><div class="abs" style="left:0;top:38px;width:35px;height:410px;background:#f0f0f0"></div><div class="abs" style="left:39px;top:22px;font-size:11px;line-height:13px;color:#050608;white-space:nowrap">Name</div><div class="abs" style="left:289px;top:22px;font-size:11px;line-height:13px;color:#050608;white-space:nowrap">Description IO</div><div class="abs" style="left:539px;top:22px;font-size:11px;line-height:13px;color:#050608;white-space:nowrap">Address IO</div><div class="abs" style="left:35px;top:38px;width:575px;height:17px;background:#e9e9e9;font-size:11px;line-height:16px;color:#050608"><div style="position:absolute;top:0;height:16px;background:#fff;overflow:hidden;white-space:pre;padding-left:2px;line-height:18px;left:0;width:249px">DI_PowerOnIndicator</div><div style="position:absolute;top:0;height:16px;background:#fff;overflow:hidden;white-space:pre;padding-left:2px;line-height:18px;left:250px;width:249px">(DI) Τροφοδοσία Πίνακα</div><div style="position:absolute;top:0;height:16px;background:#fff;overflow:hidden;white-space:pre;padding-left:2px;line-height:18px;left:500px;width:75px">TR0000</div></div><div class="abs" style="left:35px;top:55px;width:575px;height:17px;background:#e9e9e9;font-size:11px;line-height:16px;color:#050608"><div style="position:absolute;top:0;height:16px;background:#fff;overflow:hidden;white-space:pre;padding-left:2px;line-height:18px;left:0;width:249px">DI_ComputerModeIndicator</div><div style="position:absolute;top:0;height:16px;background:#fff;overflow:hidden;white-space:pre;padding-left:2px;line-height:18px;left:250px;width:249px">(DI) Έλεγχος από Η/Υ</div><div style="position:absolute;top:0;height:16px;background:#fff;overflow:hidden;white-space:pre;padding-left:2px;line-height:18px;left:500px;width:75px">TR0000</div></div><div class="abs" style="left:35px;top:72px;width:575px;height:17px;background:#e9e9e9;font-size:11px;line-height:16px;color:#050608"><div style="position:absolute;top:0;height:16px;background:#fff;overflow:hidden;white-space:pre;padding-left:2px;line-height:18px;left:0;width:249px">DI_CircuitBreakerFaultIndicator</div><div style="position:absolute;top:0;height:16px;background:#fff;overflow:hidden;white-space:pre;padding-left:2px;line-height:18px;left:250px;width:249px">(DI) Πτώση Θερμικού</div><div style="position:absolute;top:0;height:16px;background:#fff;overflow:hidden;white-space:pre;padding-left:2px;line-height:18px;left:500px;width:75px">FA0000</div></div><div class="abs" style="left:35px;top:89px;width:575px;height:17px;background:#e9e9e9;font-size:11px;line-height:16px;color:#050608"><div style="position:absolute;top:0;height:16px;background:#fff;overflow:hidden;white-space:pre;padding-left:2px;line-height:18px;left:0;width:249px">DO_Siren</div><div style="position:absolute;top:0;height:16px;background:#fff;overflow:hidden;white-space:pre;padding-left:2px;line-height:18px;left:250px;width:249px">(DO) Γενική Σειρήνα</div><div style="position:absolute;top:0;height:16px;background:#fff;overflow:hidden;white-space:pre;padding-left:2px;line-height:18px;left:500px;width:75px">FA0000</div></div><div class="abs" style="left:35px;top:106px;width:575px;height:17px;background:#e9e9e9;font-size:11px;line-height:16px;color:#050608"><div style="position:absolute;top:0;height:16px;background:#fff;overflow:hidden;white-space:pre;padding-left:2px;line-height:18px;left:0;width:249px">DO_EnabledAlarm</div><div style="position:absolute;top:0;height:16px;background:#fff;overflow:hidden;white-space:pre;padding-left:2px;line-height:18px;left:250px;width:249px">(DO) Ενεργός Συναγερμός</div><div style="position:absolute;top:0;height:16px;background:#fff;overflow:hidden;white-space:pre;padding-left:2px;line-height:18px;left:500px;width:75px"></div></div><div class="abs" style="left:35px;top:123px;width:575px;height:17px;background:#e9e9e9;font-size:11px;line-height:16px;color:#050608"><div style="position:absolute;top:0;height:16px;background:#fff;overflow:hidden;white-space:pre;padding-left:2px;line-height:18px;left:0;width:249px">DI_DischargeCommand</div><div style="position:absolute;top:0;height:16px;background:#fff;overflow:hidden;white-space:pre;padding-left:2px;line-height:18px;left:250px;width:249px">(DI) Εντολή Εκφόρτωσης</div><div style="position:absolute;top:0;height:16px;background:#fff;overflow:hidden;white-space:pre;padding-left:2px;line-height:18px;left:500px;width:75px">TR0000</div></div><div class="abs" style="left:35px;top:140px;width:575px;height:17px;background:#e9e9e9;font-size:11px;line-height:16px;color:#050608"><div style="position:absolute;top:0;height:16px;background:#fff;overflow:hidden;white-space:pre;padding-left:2px;line-height:18px;left:0;width:249px">DO_HydraulicPump</div><div style="position:absolute;top:0;height:16px;background:#fff;overflow:hidden;white-space:pre;padding-left:2px;line-height:18px;left:250px;width:249px">(DO) Αντλία Υδραυλικού</div><div style="position:absolute;top:0;height:16px;background:#fff;overflow:hidden;white-space:pre;padding-left:2px;line-height:18px;left:500px;width:75px"></div></div><div class="abs" style="left:35px;top:157px;width:575px;height:17px;background:#e9e9e9;font-size:11px;line-height:16px;color:#050608"><div style="position:absolute;top:0;height:16px;background:#fff;overflow:hidden;white-space:pre;padding-left:2px;line-height:18px;left:0;width:249px">DI_MixerCircuitBreakerFaultIndicator</div><div style="position:absolute;top:0;height:16px;background:#fff;overflow:hidden;white-space:pre;padding-left:2px;line-height:18px;left:250px;width:249px">(DI) Πτώση Θερμικού Mixer</div><div style="position:absolute;top:0;height:16px;background:#fff;overflow:hidden;white-space:pre;padding-left:2px;line-height:18px;left:500px;width:75px"></div></div><div class="abs" style="left:35px;top:174px;width:575px;height:17px;background:#e9e9e9;font-size:11px;line-height:16px;color:#050608"><div style="position:absolute;top:0;height:16px;background:#fff;overflow:hidden;white-space:pre;padding-left:2px;line-height:18px;left:0;width:249px">DO_ExtraStorageFilters</div><div style="position:absolute;top:0;height:16px;background:#fff;overflow:hidden;white-space:pre;padding-left:2px;line-height:18px;left:250px;width:249px">(DO) Φίλτρα Προαποθήκης</div><div style="position:absolute;top:0;height:16px;background:#fff;overflow:hidden;white-space:pre;padding-left:2px;line-height:18px;left:500px;width:75px"></div></div><div class="abs" style="left:35px;top:191px;width:575px;height:17px;background:#e9e9e9;font-size:11px;line-height:16px;color:#050608"><div style="position:absolute;top:0;height:16px;background:#fff;overflow:hidden;white-space:pre;padding-left:2px;line-height:18px;left:0;width:249px">DO_AfterMixerExtraStorageReadyForDischarge</div><div style="position:absolute;top:0;height:16px;background:#fff;overflow:hidden;white-space:pre;padding-left:2px;line-height:18px;left:250px;width:249px">(DO) Δυνατή Εκφόρτωση  Προαποθήκης Μετά το</div><div style="position:absolute;top:0;height:16px;background:#fff;overflow:hidden;white-space:pre;padding-left:2px;line-height:18px;left:500px;width:75px"></div></div><div class="abs" style="left:35px;top:208px;width:575px;height:17px;background:#e9e9e9;font-size:11px;line-height:16px;color:#050608"><div style="position:absolute;top:0;height:16px;background:#fff;overflow:hidden;white-space:pre;padding-left:2px;line-height:18px;left:0;width:249px">DI_AfterMixerExtraStorageDischarge</div><div style="position:absolute;top:0;height:16px;background:#fff;overflow:hidden;white-space:pre;padding-left:2px;line-height:18px;left:250px;width:249px">(DI) Εκφόρτωση Προαποθήκης Μετά το Μίξερ</div><div style="position:absolute;top:0;height:16px;background:#fff;overflow:hidden;white-space:pre;padding-left:2px;line-height:18px;left:500px;width:75px"></div></div><div class="abs" style="left:35px;top:225px;width:575px;height:17px;background:#e9e9e9;font-size:11px;line-height:16px;color:#050608"><div style="position:absolute;top:0;height:16px;background:#fff;overflow:hidden;white-space:pre;padding-left:2px;line-height:18px;left:0;width:249px">DO_ProductionComplete</div><div style="position:absolute;top:0;height:16px;background:#fff;overflow:hidden;white-space:pre;padding-left:2px;line-height:18px;left:250px;width:249px">(DO) Ολοκλήρωση Παραγωγής</div><div style="position:absolute;top:0;height:16px;background:#fff;overflow:hidden;white-space:pre;padding-left:2px;line-height:18px;left:500px;width:75px"></div></div><div class="abs" style="left:35px;top:242px;width:575px;height:17px;background:#e9e9e9;font-size:11px;line-height:16px;color:#050608"><div style="position:absolute;top:0;height:16px;background:#fff;overflow:hidden;white-space:pre;padding-left:2px;line-height:18px;left:0;width:249px">DO_Extra1</div><div style="position:absolute;top:0;height:16px;background:#fff;overflow:hidden;white-space:pre;padding-left:2px;line-height:18px;left:250px;width:249px">BYPASS ΝΕΡΟΥ</div><div style="position:absolute;top:0;height:16px;background:#fff;overflow:hidden;white-space:pre;padding-left:2px;line-height:18px;left:500px;width:75px"></div></div><div class="abs" style="left:35px;top:259px;width:575px;height:17px;background:#e9e9e9;font-size:11px;line-height:16px;color:#050608"><div style="position:absolute;top:0;height:16px;background:#fff;overflow:hidden;white-space:pre;padding-left:2px;line-height:18px;left:0;width:249px">DO_Extra2</div><div style="position:absolute;top:0;height:16px;background:#fff;overflow:hidden;white-space:pre;padding-left:2px;line-height:18px;left:250px;width:249px">ΠΛΥΣΗ ΠΡΟΣΜΙΚΤΟΥ</div><div style="position:absolute;top:0;height:16px;background:#fff;overflow:hidden;white-space:pre;padding-left:2px;line-height:18px;left:500px;width:75px"></div></div><div class="abs" style="left:35px;top:276px;width:575px;height:17px;background:#e9e9e9;font-size:11px;line-height:16px;color:#050608"><div style="position:absolute;top:0;height:16px;background:#fff;overflow:hidden;white-space:pre;padding-left:2px;line-height:18px;left:0;width:249px">DO_Extra3</div><div style="position:absolute;top:0;height:16px;background:#fff;overflow:hidden;white-space:pre;padding-left:2px;line-height:18px;left:250px;width:249px"></div><div style="position:absolute;top:0;height:16px;background:#fff;overflow:hidden;white-space:pre;padding-left:2px;line-height:18px;left:500px;width:75px"></div></div><div class="abs" style="left:35px;top:293px;width:575px;height:17px;background:#e9e9e9;font-size:11px;line-height:16px;color:#050608"><div style="position:absolute;top:0;height:16px;background:#fff;overflow:hidden;white-space:pre;padding-left:2px;line-height:18px;left:0;width:249px">DO_Extra4</div><div style="position:absolute;top:0;height:16px;background:#fff;overflow:hidden;white-space:pre;padding-left:2px;line-height:18px;left:250px;width:249px"></div><div style="position:absolute;top:0;height:16px;background:#fff;overflow:hidden;white-space:pre;padding-left:2px;line-height:18px;left:500px;width:75px"></div></div><div class="abs" style="left:35px;top:310px;width:575px;height:17px;background:#e9e9e9;font-size:11px;line-height:16px;color:#050608"><div style="position:absolute;top:0;height:16px;background:#fff;overflow:hidden;white-space:pre;padding-left:2px;line-height:18px;left:0;width:249px">DO_Extra5</div><div style="position:absolute;top:0;height:16px;background:#fff;overflow:hidden;white-space:pre;padding-left:2px;line-height:18px;left:250px;width:249px"></div><div style="position:absolute;top:0;height:16px;background:#fff;overflow:hidden;white-space:pre;padding-left:2px;line-height:18px;left:500px;width:75px"></div></div><div class="abs" style="left:35px;top:327px;width:575px;height:17px;background:#e9e9e9;font-size:11px;line-height:16px;color:#050608"><div style="position:absolute;top:0;height:16px;background:#fff;overflow:hidden;white-space:pre;padding-left:2px;line-height:18px;left:0;width:249px">DO_Extra6</div><div style="position:absolute;top:0;height:16px;background:#fff;overflow:hidden;white-space:pre;padding-left:2px;line-height:18px;left:250px;width:249px"></div><div style="position:absolute;top:0;height:16px;background:#fff;overflow:hidden;white-space:pre;padding-left:2px;line-height:18px;left:500px;width:75px"></div></div><div class="abs" style="left:35px;top:344px;width:575px;height:17px;background:#e9e9e9;font-size:11px;line-height:16px;color:#050608"><div style="position:absolute;top:0;height:16px;background:#fff;overflow:hidden;white-space:pre;padding-left:2px;line-height:18px;left:0;width:249px">DO_Extra7</div><div style="position:absolute;top:0;height:16px;background:#fff;overflow:hidden;white-space:pre;padding-left:2px;line-height:18px;left:250px;width:249px"></div><div style="position:absolute;top:0;height:16px;background:#fff;overflow:hidden;white-space:pre;padding-left:2px;line-height:18px;left:500px;width:75px"></div></div><div class="abs" style="left:35px;top:361px;width:575px;height:17px;background:#e9e9e9;font-size:11px;line-height:16px;color:#050608"><div style="position:absolute;top:0;height:16px;background:#fff;overflow:hidden;white-space:pre;padding-left:2px;line-height:18px;left:0;width:249px">DO_Extra8</div><div style="position:absolute;top:0;height:16px;background:#fff;overflow:hidden;white-space:pre;padding-left:2px;line-height:18px;left:250px;width:249px"></div><div style="position:absolute;top:0;height:16px;background:#fff;overflow:hidden;white-space:pre;padding-left:2px;line-height:18px;left:500px;width:75px"></div></div><div class="abs" style="left:35px;top:378px;width:575px;height:17px;background:#e9e9e9;font-size:11px;line-height:16px;color:#050608"><div style="position:absolute;top:0;height:16px;background:#fff;overflow:hidden;white-space:pre;padding-left:2px;line-height:18px;left:0;width:249px">DO_Extra9</div><div style="position:absolute;top:0;height:16px;background:#fff;overflow:hidden;white-space:pre;padding-left:2px;line-height:18px;left:250px;width:249px"></div><div style="position:absolute;top:0;height:16px;background:#fff;overflow:hidden;white-space:pre;padding-left:2px;line-height:18px;left:500px;width:75px"></div></div><div class="abs" style="left:35px;top:395px;width:575px;height:17px;background:#e9e9e9;font-size:11px;line-height:16px;color:#050608"><div style="position:absolute;top:0;height:16px;background:#fff;overflow:hidden;white-space:pre;padding-left:2px;line-height:18px;left:0;width:249px">DO_Extra10</div><div style="position:absolute;top:0;height:16px;background:#fff;overflow:hidden;white-space:pre;padding-left:2px;line-height:18px;left:250px;width:249px"></div><div style="position:absolute;top:0;height:16px;background:#fff;overflow:hidden;white-space:pre;padding-left:2px;line-height:18px;left:500px;width:75px"></div></div><div class="abs" style="left:35px;top:412px;width:575px;height:17px;background:#e9e9e9;font-size:11px;line-height:16px;color:#050608"><div style="position:absolute;top:0;height:16px;background:#fff;overflow:hidden;white-space:pre;padding-left:2px;line-height:18px;left:0;width:249px">DI_Extra1</div><div style="position:absolute;top:0;height:16px;background:#fff;overflow:hidden;white-space:pre;padding-left:2px;line-height:18px;left:250px;width:249px"></div><div style="position:absolute;top:0;height:16px;background:#fff;overflow:hidden;white-space:pre;padding-left:2px;line-height:18px;left:500px;width:75px"></div></div><div class="abs" style="left:35px;top:429px;width:575px;height:17px;background:#e9e9e9;font-size:11px;line-height:16px;color:#050608"><div style="position:absolute;top:0;height:16px;background:#fff;overflow:hidden;white-space:pre;padding-left:2px;line-height:18px;left:0;width:249px">DI_Extra2</div><div style="position:absolute;top:0;height:16px;background:#fff;overflow:hidden;white-space:pre;padding-left:2px;line-height:18px;left:250px;width:249px"></div><div style="position:absolute;top:0;height:16px;background:#fff;overflow:hidden;white-space:pre;padding-left:2px;line-height:18px;left:500px;width:75px"></div></div><div class="abs" style="left:35px;top:446px;width:575px;height:17px;background:#e9e9e9;font-size:11px;line-height:16px;color:#050608"><div style="position:absolute;top:0;height:16px;background:#fff;overflow:hidden;white-space:pre;padding-left:2px;line-height:18px;left:0;width:249px"></div><div style="position:absolute;top:0;height:16px;background:#fff;overflow:hidden;white-space:pre;padding-left:2px;line-height:18px;left:250px;width:249px"></div><div style="position:absolute;top:0;height:16px;background:#fff;overflow:hidden;white-space:pre;padding-left:2px;line-height:18px;left:500px;width:75px"></div></div><svg class="abs" style="left:4px;top:41px" width="6" height="10" viewBox="0 0 6 10"><path d="M0 0l5.5 5L0 10z" fill="#000"/></svg><div class="abs" style="left:703px;top:19px;width:17px;height:429px;background:#f0f0f0"></div><div class="abs" style="left:704px;top:37px;width:15px;height:198px;border:1px solid #979797;border-radius:2px;background:linear-gradient(to right,#f3f3f3,#e6e6e8 50%,#cbcbcf)"></div><div class="abs" style="left:708px;top:134px;width:7px;height:8px;background:repeating-linear-gradient(to bottom,#5a5a5a 0 1px,#fafafa 1px 2px,transparent 2px 3px)"></div><svg class="abs" style="left:708px;top:26px" width="7" height="5" viewBox="0 0 7 5"><path d="M0 4.5L3.5 .5 7 4.5z" fill="#404040"/></svg><svg class="abs" style="left:708px;top:437px" width="7" height="5" viewBox="0 0 7 5"><path d="M0 .5L3.5 4.5 7 .5z" fill="#404040"/></svg></div><svg class="abs" style="left:756px;top:571px" width="34" height="36" viewBox="0 0 34 36" fill="none"><path d="M4.5 15.5C5.5 9 10.5 5 17 5c3.5 0 6.5 1.3 8.8 3.5" stroke="#5a6a97" stroke-width="5.4"/><path d="M32.5 .5v13.5H19z" fill="#5a6a97"/><path d="M29.5 20.5C28.5 27 23.5 31 17 31c-3.5 0-6.5-1.3-8.8-3.5" stroke="#5a6a97" stroke-width="5.4"/><path d="M1.5 35.5V22H15z" fill="#5a6a97"/></svg><div class="abs" style="left:792px;top:582px;font-size:12px;line-height:14px;letter-spacing:-.1px;color:#a9adba;white-space:nowrap">Reset Settings</div><svg class="abs" style="left:893px;top:572px" width="33" height="34" viewBox="0 0 33 34"><path d="M0 5c0-2.5 1.5-4 4-4h18.5L32 10.5V29c0 2.5-1.5 4-4 4H4c-2.5 0-4-1.5-4-4z" fill="#5a6a97"/><rect x="14.5" y="3" width="2.6" height="5" rx="1" fill="#262a3a"/><rect x="5.5" y="15.5" width="21" height="12.5" rx="2" fill="#222636"/><path d="M9 20h14M9 24h14" stroke="#5a6a97" stroke-width="2.2"/></svg><div class="abs" style="left:932px;top:582px;font-size:12px;line-height:14px;letter-spacing:-.1px;color:#a9adba;white-space:nowrap">Save Settings</div></div></div></body></html>
